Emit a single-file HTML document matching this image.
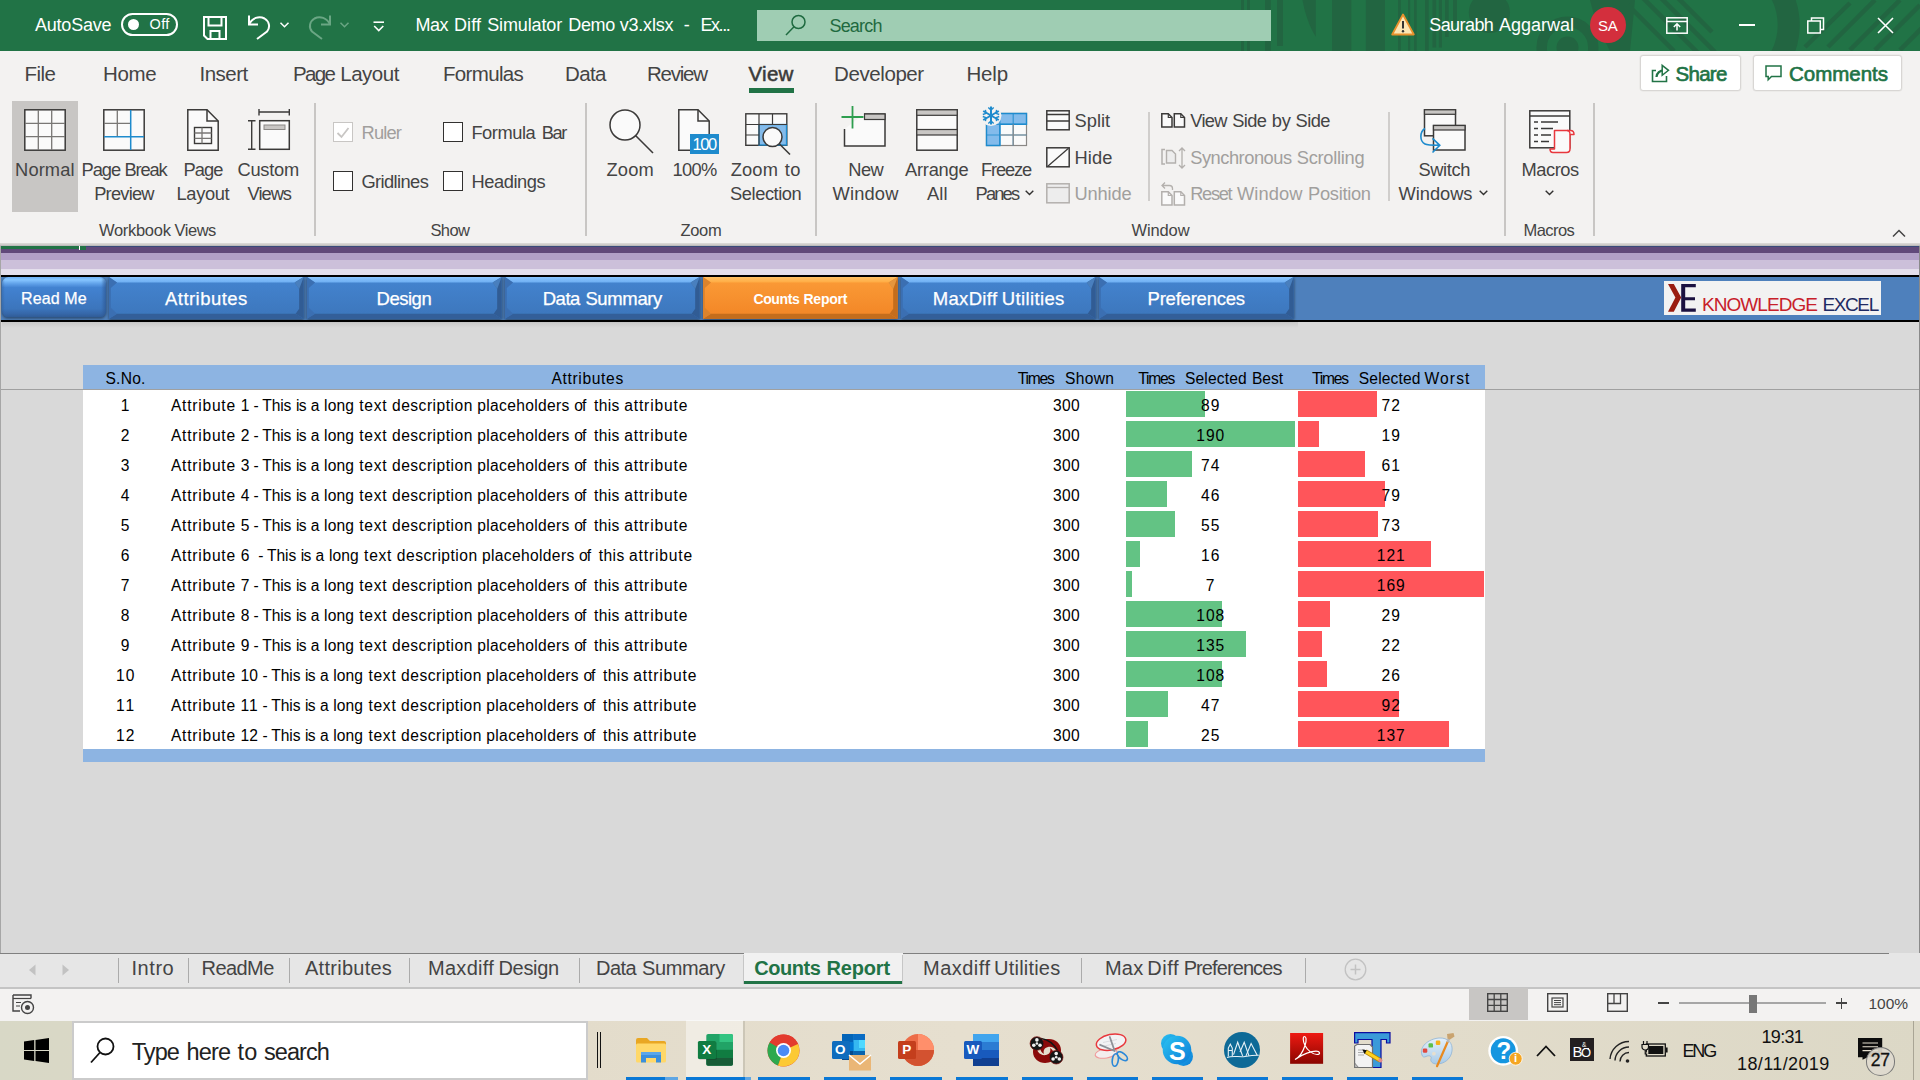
<!DOCTYPE html>
<html lang="en"><head><meta charset="utf-8"><title>Max Diff Simulator Demo v3.xlsx - Excel</title><style>
*{box-sizing:border-box;margin:0;padding:0}
html,body{width:1920px;height:1080px;overflow:hidden;background:#d9d9d9;font-family:"Liberation Sans",sans-serif}
.t{position:absolute;white-space:pre;display:block}
.b{position:absolute}
svg{position:absolute;overflow:visible}
</style></head><body>
<div class="b" style="left:0px;top:0px;width:1920px;height:50.5px;background:#217346;"></div>
<span class="t" style="left:34.90px;top:15.96px;font-size:18.00px;line-height:18.00px;color:#fff;letter-spacing:-0.195px;">AutoSave</span>
<div class="b" style="left:121px;top:12.5px;width:57px;height:23.5px;border:2px solid #fff;border-radius:12px"></div>
<div class="b" style="left:128px;top:18.5px;width:11px;height:11px;border-radius:50%;background:#fff"></div>
<span class="t" style="left:149.50px;top:17.23px;font-size:14.50px;line-height:14.50px;color:#fff;letter-spacing:0.369px;">Off</span>
<svg style="left:203px;top:16px;" width="24" height="24" viewBox="0 0 24 24"><path d="M1 1h22v22H4.5L1 19.5z M5.5 1v8.5h13V1 M7.5 23v-8h9v8" fill="none" stroke="#fff" stroke-width="2" stroke-linejoin="miter"/></svg>
<svg style="left:247px;top:14px;" width="24" height="26" viewBox="0 0 24 26"><path d="M2 1.5v9h9" fill="none" stroke="#fff" stroke-width="2"/><path d="M2 10.5C5 4 12 1.500 17.5 4.500C22.500 7.500 23.500 13.500 20 17.500L10 25" fill="none" stroke="#fff" stroke-width="2"/></svg>
<svg style="left:280px;top:22px;" width="9" height="6" viewBox="0 0 9 6"><path d="M0.500 0.800L4.500 4.800L8.500 0.800" fill="none" stroke="#fff" stroke-width="1.5"/></svg>
<svg style="left:308px;top:14px;" width="24" height="26" viewBox="0 0 24 26"><g transform="translate(24,0) scale(-1,1)"><path d="M2 1.5v9h9" fill="none" stroke="#6aa684" stroke-width="2"/><path d="M2 10.5C5 4 12 1.500 17.5 4.500C22.500 7.500 23.500 13.500 20 17.500L10 25" fill="none" stroke="#6aa684" stroke-width="2"/></g></svg>
<svg style="left:340px;top:22px;" width="9" height="6" viewBox="0 0 9 6"><path d="M0.500 0.800L4.500 4.800L8.500 0.800" fill="none" stroke="#6aa684" stroke-width="1.5"/></svg>
<svg style="left:373px;top:21px;" width="12" height="11" viewBox="0 0 12 11"><path d="M0.500 1.200h10.500" stroke="#fff" stroke-width="1.6"/><path d="M1.200 5L5.750 9.500L10.300 5" fill="none" stroke="#fff" stroke-width="1.6"/></svg>
<span class="t" style="left:415.40px;top:15.96px;font-size:18.00px;line-height:18.00px;color:#fff;letter-spacing:-0.446px;">Max </span>
<span class="t" style="left:453.90px;top:15.96px;font-size:18.00px;line-height:18.00px;color:#fff;letter-spacing:0.146px;">Diff </span>
<span class="t" style="left:487.20px;top:15.96px;font-size:18.00px;line-height:18.00px;color:#fff;letter-spacing:-0.133px;">Simulator </span>
<span class="t" style="left:568.20px;top:15.96px;font-size:18.00px;line-height:18.00px;color:#fff;letter-spacing:-0.290px;">Demo </span>
<span class="t" style="left:619.80px;top:15.96px;font-size:18.00px;line-height:18.00px;color:#fff;letter-spacing:-0.233px;">v3.xlsx </span>
<span class="t" style="left:683.70px;top:15.96px;font-size:18.00px;line-height:18.00px;color:#fff;">- </span>
<span class="t" style="left:700.50px;top:15.96px;font-size:18.00px;line-height:18.00px;color:#fff;letter-spacing:-1.448px;">Ex...</span>
<div class="b" style="left:1240px;top:0;width:680px;height:50.5px;overflow:hidden"><svg style="left:-1240px;top:0" width="1920" height="51" viewBox="0 0 1920 51"><g fill="#226541"><rect x="1241" y="0" width="3" height="51"/><rect x="1247" y="0" width="3" height="51"/><rect x="1265" y="0" width="5.800" height="51"/><rect x="1277" y="0" width="6" height="46"/><path d="M1302.500 0h13.300v36.700C1310 28 1305 14 1302.500 0z"/><rect x="1332" y="0" width="19.300" height="51"/><rect x="1365.800" y="0" width="19.200" height="51"/><rect x="1398" y="0" width="2.800" height="51"/><rect x="1408" y="0" width="2.200" height="51"/><rect x="1414" y="0" width="2.700" height="51"/><rect x="1425" y="0" width="3.700" height="51"/><rect x="1432.500" y="0" width="3.700" height="47.500"/><rect x="1438.800" y="0" width="3.200" height="47.500"/><rect x="1445" y="0" width="3.700" height="37"/><rect x="1453" y="0" width="4" height="23"/><circle cx="1489.400" cy="12.500" r="20.600"/><circle cx="1567.500" cy="47.500" r="11"/><path d="M1590 0h45l-5 51h-20c-8-15-15-30-20-51z"/></g><circle cx="1567.500" cy="47.500" r="25.800" fill="none" stroke="#226541" stroke-width="10.400"/><path d="M1768 -10A68 68 0 0 1 1768 60" fill="none" stroke="#226541" stroke-width="22" transform="translate(11,0)"/><g stroke="#226541" stroke-width="4.500" fill="none"><path d="M1628 5l46 46M1640 -5l58 58M1655 -8l60 60M1672 -8l40 40"/><path d="M1805 47L1850 3M1828 47l47-47M1850 50l50-50M1875 50l45-45M1900 50l25-25"/></g></svg></div>
<div class="b" style="left:757px;top:10px;width:514px;height:31px;background:#9fcdb3;"></div>
<svg style="left:785px;top:14px;" width="22" height="22" viewBox="0 0 22 22"><circle cx="13.500" cy="8" r="6.500" fill="none" stroke="#1f6a40" stroke-width="1.5"/><path d="M9 12.800L1 21" stroke="#1f6a40" stroke-width="1.5"/></svg>
<span class="t" style="left:829.50px;top:16.96px;font-size:18.00px;line-height:18.00px;color:#1f6a40;letter-spacing:-0.827px;">Search</span>
<svg style="left:1391px;top:13px;" width="24" height="23" viewBox="0 0 24 23"><path d="M12 1.500L22.800 21.500H1.200z" fill="#fbe6b4" stroke="#e8912d" stroke-width="1.8" stroke-linejoin="round"/><path d="M12 8v7.500" stroke="#333" stroke-width="2"/><circle cx="12" cy="18.300" r="1.200" fill="#333"/></svg>
<span class="t" style="left:1429.20px;top:15.96px;font-size:18.00px;line-height:18.00px;color:#fff;letter-spacing:-0.563px;">Saurabh </span>
<span class="t" style="left:1498.90px;top:15.96px;font-size:18.00px;line-height:18.00px;color:#fff;letter-spacing:0.007px;">Aggarwal</span>
<div class="b" style="left:1590px;top:7px;width:36px;height:36px;border-radius:50%;background:#d32f3d"></div>
<span class="t" style="left:1598.00px;top:17.80px;font-size:15.00px;line-height:15.00px;color:#fff;letter-spacing:-0.344px;">SA</span>
<svg style="left:1666px;top:17px;" width="22" height="17" viewBox="0 0 22 17"><rect x="0.800" y="0.800" width="20.400" height="15.400" fill="none" stroke="#fff" stroke-width="1.5"/><path d="M0.800 4.500h20.400" stroke="#fff" stroke-width="1.5"/><path d="M11 13.500v-6.500M7.800 10L11 6.800L14.200 10" fill="none" stroke="#fff" stroke-width="1.5"/></svg>
<div class="b" style="left:1739px;top:24.3px;width:16px;height:1.6px;background:#fff;"></div>
<svg style="left:1807px;top:17px;" width="18" height="17" viewBox="0 0 18 17"><path d="M4.500 4V1h12v11.500h-3" fill="none" stroke="#fff" stroke-width="1.5"/><rect x="0.800" y="4" width="12.500" height="12" fill="none" stroke="#fff" stroke-width="1.5"/></svg>
<svg style="left:1877px;top:17px;" width="17" height="17" viewBox="0 0 17 17"><path d="M1 1L16 16M16 1L1 16" stroke="#fff" stroke-width="1.6"/></svg>
<div class="b" style="left:0px;top:50.5px;width:1920px;height:192.5px;background:#f3f2f1;"></div>
<div class="b" style="left:0;top:243px;width:1920px;height:3px;background:linear-gradient(#dedcda,#cfcdcb 50%,#b4b4b4)"></div>
<span class="t" style="left:24.50px;top:64.15px;font-size:20.50px;line-height:20.50px;color:#444;letter-spacing:-0.585px;">File</span>
<span class="t" style="left:103.00px;top:64.15px;font-size:20.50px;line-height:20.50px;color:#444;letter-spacing:-0.339px;">Home</span>
<span class="t" style="left:199.50px;top:64.15px;font-size:20.50px;line-height:20.50px;color:#444;letter-spacing:-0.506px;">Insert</span>
<span class="t" style="left:293.10px;top:64.15px;font-size:20.50px;line-height:20.50px;color:#444;letter-spacing:-1.654px;">Page </span>
<span class="t" style="left:340.30px;top:64.15px;font-size:20.50px;line-height:20.50px;color:#444;letter-spacing:-0.502px;">Layout</span>
<span class="t" style="left:443.00px;top:64.15px;font-size:20.50px;line-height:20.50px;color:#444;letter-spacing:-0.658px;">Formulas</span>
<span class="t" style="left:565.00px;top:64.15px;font-size:20.50px;line-height:20.50px;color:#444;letter-spacing:-0.661px;">Data</span>
<span class="t" style="left:647.00px;top:64.15px;font-size:20.50px;line-height:20.50px;color:#444;letter-spacing:-1.222px;">Review</span>
<span class="t" style="left:834.00px;top:64.15px;font-size:20.50px;line-height:20.50px;color:#444;letter-spacing:-0.406px;">Developer</span>
<span class="t" style="left:966.50px;top:64.15px;font-size:20.50px;line-height:20.50px;color:#444;letter-spacing:-0.192px;">Help</span>
<span class="t" style="left:748.50px;top:64.15px;font-size:20.50px;line-height:20.50px;color:#3a3a3a;letter-spacing:0.263px;-webkit-text-stroke:0.55px;">View</span>
<div class="b" style="left:749px;top:88.3px;width:45px;height:4.3px;background:#217346;"></div>
<div class="b" style="left:1640px;top:55px;width:101px;height:36px;background:#fff;border:1px solid #d8d6d4;border-radius:3px;box-shadow:0 0 0 0.500px #e6e4e2"></div>
<div class="b" style="left:1753px;top:55px;width:149px;height:36px;background:#fff;border:1px solid #d8d6d4;border-radius:3px;box-shadow:0 0 0 0.500px #e6e4e2"></div>
<svg style="left:1651px;top:64px;" width="20" height="18" viewBox="0 0 20 18"><path d="M5 6.500H1.500v11h14v-5.500" fill="none" stroke="#217346" stroke-width="1.600"/><path d="M5.500 13C6 8.500 9 6.300 13.500 6.300" fill="none" stroke="#217346" stroke-width="2.200"/><path d="M11.200 1.300L17.500 6.300L11.200 11.300z" fill="#fff" stroke="#217346" stroke-width="1.500" stroke-linejoin="miter"/></svg>
<span class="t" style="left:1675.50px;top:64.15px;font-size:20.50px;line-height:20.50px;color:#217346;letter-spacing:-0.715px;-webkit-text-stroke:0.65px;">Share</span>
<svg style="left:1765.3px;top:64.8px;" width="18" height="17" viewBox="0 0 18 17"><path d="M1 1h15v10.500h-9.500l-3.300 3.300v-3.300h-2.200z" fill="none" stroke="#217346" stroke-width="1.5" stroke-linejoin="miter"/></svg>
<span class="t" style="left:1789.00px;top:64.15px;font-size:20.50px;line-height:20.50px;color:#217346;letter-spacing:-0.015px;-webkit-text-stroke:0.65px;">Comments</span>
<div class="b" style="left:313.7px;top:102.8px;width:2px;height:133.7px;background:#c8c6c4;"></div>
<div class="b" style="left:585px;top:102.8px;width:2px;height:133.7px;background:#c8c6c4;"></div>
<div class="b" style="left:815px;top:102.8px;width:2px;height:133.7px;background:#c8c6c4;"></div>
<div class="b" style="left:1503.7px;top:102.8px;width:2px;height:133.7px;background:#c8c6c4;"></div>
<div class="b" style="left:1592.7px;top:102.8px;width:2px;height:133.7px;background:#c8c6c4;"></div>
<div class="b" style="left:1148.4px;top:112px;width:2px;height:88.5px;background:#d0cecc;"></div>
<div class="b" style="left:1388px;top:112px;width:2px;height:88.5px;background:#d0cecc;"></div>
<span class="t" style="left:98.90px;top:221.63px;font-size:16.50px;line-height:16.50px;color:#444;letter-spacing:-0.278px;">Workbook </span>
<span class="t" style="left:174.50px;top:221.63px;font-size:16.50px;line-height:16.50px;color:#444;letter-spacing:-0.471px;">Views</span>
<span class="t" style="left:430.50px;top:221.63px;font-size:16.50px;line-height:16.50px;color:#444;letter-spacing:-0.652px;">Show</span>
<span class="t" style="left:680.50px;top:221.63px;font-size:16.50px;line-height:16.50px;color:#444;letter-spacing:-0.339px;">Zoom</span>
<span class="t" style="left:1131.50px;top:221.63px;font-size:16.50px;line-height:16.50px;color:#444;letter-spacing:-0.125px;">Window</span>
<span class="t" style="left:1523.50px;top:221.63px;font-size:16.50px;line-height:16.50px;color:#444;letter-spacing:-0.562px;">Macros</span>
<svg style="left:1892px;top:229px;" width="14" height="9" viewBox="0 0 14 9"><path d="M1 7.500L7 1.500L13 7.500" fill="none" stroke="#444" stroke-width="1.5"/></svg>
<div class="b" style="left:12px;top:100.6px;width:66px;height:111.4px;background:#c8c6c4;"></div>
<span class="t" style="left:15.10px;top:160.51px;font-size:18.30px;line-height:18.30px;color:#444;letter-spacing:0.087px;">Normal</span>
<span class="t" style="left:81.40px;top:160.51px;font-size:18.30px;line-height:18.30px;color:#444;letter-spacing:-0.944px;">Page </span>
<span class="t" style="left:124.50px;top:160.51px;font-size:18.30px;line-height:18.30px;color:#444;letter-spacing:-1.148px;">Break</span>
<span class="t" style="left:94.20px;top:184.51px;font-size:18.30px;line-height:18.30px;color:#444;letter-spacing:-0.774px;">Preview</span>
<span class="t" style="left:183.50px;top:160.51px;font-size:18.30px;line-height:18.30px;color:#444;letter-spacing:-0.915px;">Page</span>
<span class="t" style="left:176.50px;top:184.51px;font-size:18.30px;line-height:18.30px;color:#444;letter-spacing:-0.344px;">Layout</span>
<span class="t" style="left:237.50px;top:160.51px;font-size:18.30px;line-height:18.30px;color:#444;letter-spacing:-0.273px;">Custom</span>
<span class="t" style="left:247.50px;top:184.51px;font-size:18.30px;line-height:18.30px;color:#444;letter-spacing:-0.986px;">Views</span>
<span class="t" style="left:606.50px;top:160.51px;font-size:18.30px;line-height:18.30px;color:#444;letter-spacing:0.190px;">Zoom</span>
<span class="t" style="left:672.50px;top:160.51px;font-size:18.30px;line-height:18.30px;color:#444;letter-spacing:-0.647px;">100%</span>
<span class="t" style="left:730.70px;top:160.51px;font-size:18.30px;line-height:18.30px;color:#444;letter-spacing:0.162px;">Zoom </span>
<span class="t" style="left:784.80px;top:160.51px;font-size:18.30px;line-height:18.30px;color:#444;letter-spacing:0.300px;">to</span>
<span class="t" style="left:730.10px;top:184.51px;font-size:18.30px;line-height:18.30px;color:#444;letter-spacing:-0.449px;">Selection</span>
<span class="t" style="left:848.20px;top:160.51px;font-size:18.30px;line-height:18.30px;color:#444;letter-spacing:-0.511px;">New</span>
<span class="t" style="left:832.50px;top:184.51px;font-size:18.30px;line-height:18.30px;color:#444;letter-spacing:0.176px;">Window</span>
<span class="t" style="left:905.10px;top:160.51px;font-size:18.30px;line-height:18.30px;color:#444;letter-spacing:-0.253px;">Arrange</span>
<span class="t" style="left:927.00px;top:184.51px;font-size:18.30px;line-height:18.30px;color:#444;letter-spacing:0.069px;">All</span>
<span class="t" style="left:981.00px;top:160.51px;font-size:18.30px;line-height:18.30px;color:#444;letter-spacing:-1.165px;">Freeze</span>
<span class="t" style="left:975.50px;top:184.51px;font-size:18.30px;line-height:18.30px;color:#444;letter-spacing:-1.810px;">Panes</span>
<span class="t" style="left:1418.50px;top:160.51px;font-size:18.30px;line-height:18.30px;color:#444;letter-spacing:-0.393px;">Switch</span>
<span class="t" style="left:1398.50px;top:184.51px;font-size:18.30px;line-height:18.30px;color:#444;letter-spacing:-0.026px;">Windows</span>
<span class="t" style="left:1521.50px;top:160.51px;font-size:18.30px;line-height:18.30px;color:#444;letter-spacing:-0.461px;">Macros</span>
<svg style="left:1025px;top:189.5px;" width="9" height="6" viewBox="0 0 9 6"><path d="M0.700 0.800L4.500 4.600L8.300 0.800" fill="none" stroke="#323130" stroke-width="1.4"/></svg>
<svg style="left:1478.5px;top:189.5px;" width="9" height="6" viewBox="0 0 9 6"><path d="M0.700 0.800L4.500 4.600L8.300 0.800" fill="none" stroke="#323130" stroke-width="1.4"/></svg>
<svg style="left:1545px;top:189.5px;" width="9" height="6" viewBox="0 0 9 6"><path d="M0.700 0.800L4.500 4.600L8.300 0.800" fill="none" stroke="#323130" stroke-width="1.4"/></svg>
<div class="b" style="left:333px;top:122px;width:20px;height:20px;background:#fff;border:1.300px solid #c8c6c4"></div>
<div class="b" style="left:443px;top:122px;width:20px;height:20px;background:#fff;border:1.300px solid #323130"></div>
<div class="b" style="left:333px;top:171px;width:20px;height:20px;background:#fff;border:1.300px solid #323130"></div>
<div class="b" style="left:443px;top:171px;width:20px;height:20px;background:#fff;border:1.300px solid #323130"></div>
<svg style="left:336px;top:126px;" width="14" height="13" viewBox="0 0 14 13"><path d="M1.500 7L5.500 11L12.500 2" fill="none" stroke="#c8c6c4" stroke-width="1.8"/></svg>
<span class="t" style="left:361.50px;top:124.21px;font-size:18.30px;line-height:18.30px;color:#a19f9d;letter-spacing:-0.819px;">Ruler</span>
<span class="t" style="left:471.40px;top:124.21px;font-size:18.30px;line-height:18.30px;color:#444;letter-spacing:-0.453px;">Formula </span>
<span class="t" style="left:541.70px;top:124.21px;font-size:18.30px;line-height:18.30px;color:#444;letter-spacing:-1.381px;">Bar</span>
<span class="t" style="left:361.50px;top:172.51px;font-size:18.30px;line-height:18.30px;color:#444;letter-spacing:-0.605px;">Gridlines</span>
<span class="t" style="left:471.50px;top:172.51px;font-size:18.30px;line-height:18.30px;color:#444;letter-spacing:-0.433px;">Headings</span>
<span class="t" style="left:1074.50px;top:111.51px;font-size:18.30px;line-height:18.30px;color:#444;letter-spacing:0.027px;">Split</span>
<span class="t" style="left:1074.50px;top:149.21px;font-size:18.30px;line-height:18.30px;color:#444;letter-spacing:0.112px;">Hide</span>
<span class="t" style="left:1074.50px;top:185.21px;font-size:18.30px;line-height:18.30px;color:#a19f9d;letter-spacing:-0.170px;">Unhide</span>
<span class="t" style="left:1190.20px;top:111.51px;font-size:18.30px;line-height:18.30px;color:#444;letter-spacing:-0.656px;">View </span>
<span class="t" style="left:1232.20px;top:111.51px;font-size:18.30px;line-height:18.30px;color:#444;letter-spacing:-0.598px;">Side </span>
<span class="t" style="left:1271.70px;top:111.51px;font-size:18.30px;line-height:18.30px;color:#444;letter-spacing:-0.208px;">by </span>
<span class="t" style="left:1295.60px;top:111.51px;font-size:18.30px;line-height:18.30px;color:#444;letter-spacing:-0.570px;">Side</span>
<span class="t" style="left:1190.20px;top:149.21px;font-size:18.30px;line-height:18.30px;color:#a19f9d;letter-spacing:-0.478px;">Synchronous </span>
<span class="t" style="left:1296.80px;top:149.21px;font-size:18.30px;line-height:18.30px;color:#a19f9d;letter-spacing:-0.295px;">Scrolling</span>
<span class="t" style="left:1190.20px;top:185.21px;font-size:18.30px;line-height:18.30px;color:#a19f9d;letter-spacing:-1.326px;">Reset </span>
<span class="t" style="left:1236.90px;top:185.21px;font-size:18.30px;line-height:18.30px;color:#a19f9d;letter-spacing:0.122px;">Window </span>
<span class="t" style="left:1308.10px;top:185.21px;font-size:18.30px;line-height:18.30px;color:#a19f9d;letter-spacing:-0.300px;">Position</span>
<svg style="left:24px;top:109px;" width="42" height="42" viewBox="0 0 42 42"><rect x="0.800" y="0.800" width="40.400" height="40.400" fill="#fafafa" stroke="#3b3a39" stroke-width="1.5"/><path d="M14.300 1v40M27.700 1v40M1 14.300h40M1 27.700h40" stroke="#797775" stroke-width="1.3"/></svg>
<svg style="left:103px;top:109px;" width="42" height="42" viewBox="0 0 42 42"><rect x="0.800" y="0.800" width="40.400" height="40.400" fill="#fafafa" stroke="#3b3a39" stroke-width="1.5"/><path d="M14.300 1v26.500M1 14.300h26.500" stroke="#797775" stroke-width="1.3"/><path d="M27.700 1v40M1 27.700h40" stroke="#1e8bcd" stroke-width="1.5"/></svg>
<svg style="left:186.5px;top:109px;" width="32" height="42" viewBox="0 0 32 42"><path d="M0.800 0.800h19.200l11.200 11.200v29.200H0.800z" fill="#fafafa" stroke="#3b3a39" stroke-width="1.5"/><path d="M20 0.800v11.200h11.200" fill="none" stroke="#3b3a39" stroke-width="1.5"/><rect x="7.500" y="18.500" width="17" height="16" fill="none" stroke="#3b3a39" stroke-width="1.4"/><path d="M7.500 24h17M7.500 29.300h17M15 18.500v16" stroke="#797775" stroke-width="1.3"/></svg>
<svg style="left:248px;top:109px;" width="42" height="42" viewBox="0 0 42 42"><path d="M11 3h31M11 0v6.500M41.300 0v6.500" stroke="#3b3a39" stroke-width="1.4"/><path d="M3.700 11v30M0 11.700h7.500M0 40.300h7.500" stroke="#3b3a39" stroke-width="1.4"/><rect x="11.700" y="11.700" width="29.600" height="28.600" fill="#fafafa" stroke="#3b3a39" stroke-width="1.5"/><rect x="16" y="16" width="21" height="4.500" fill="#c8c6c4" stroke="#8a8886" stroke-width="1"/></svg>
<svg style="left:609px;top:109px;" width="45" height="45" viewBox="0 0 45 45"><circle cx="16" cy="16" r="15" fill="#fafafa" stroke="#3b3a39" stroke-width="1.5"/><path d="M26.500 26.500L44 44" stroke="#3b3a39" stroke-width="1.6"/></svg>
<svg style="left:678px;top:109px;" width="42" height="46" viewBox="0 0 42 46"><path d="M0.800 0.800h19.200l11.200 11.200v29.200H0.800z" fill="#fafafa" stroke="#3b3a39" stroke-width="1.5"/><path d="M20 0.800v11.200h11.200" fill="none" stroke="#3b3a39" stroke-width="1.5"/><rect x="12" y="25" width="29" height="20" fill="#1e8bcd"/></svg>
<span class="t" style="left:692.50px;top:136.23px;font-size:16.50px;line-height:16.50px;color:#fff;letter-spacing:-1.413px;">100</span>
<svg style="left:745px;top:113px;" width="46" height="42" viewBox="0 0 46 42"><rect x="0.800" y="0.800" width="41" height="31.500" fill="#fafafa" stroke="#3b3a39" stroke-width="1.4"/><rect x="14" y="11.500" width="27.500" height="20.500" fill="#83bbeb" stroke="#1e8bcd" stroke-width="1.3"/><path d="M14 1v31M27.500 1v10M1 11.500h41M1 22h13" stroke="#3b3a39" stroke-width="1.2"/><circle cx="27.500" cy="24" r="9.500" fill="#fafafa" stroke="#3b3a39" stroke-width="1.5"/><path d="M34.500 31L45 41.500" stroke="#3b3a39" stroke-width="1.6"/></svg>
<svg style="left:841px;top:105px;" width="46" height="46" viewBox="0 0 46 46"><path d="M3.500 24v17h40.500V9H23" fill="#fafafa" stroke="#3b3a39" stroke-width="1.500"/><rect x="23.500" y="9" width="20.500" height="5.500" fill="#c8c6c4" stroke="#3b3a39" stroke-width="1.200"/><path d="M11.500 1v22.500M0.500 12h22" stroke="#2e9e4f" stroke-width="1.800"/></svg>
<svg style="left:916px;top:109px;" width="42" height="42" viewBox="0 0 42 42"><rect x="0.800" y="0.800" width="40.400" height="40.400" fill="#fafafa" stroke="#3b3a39" stroke-width="1.5"/><rect x="0.800" y="0.800" width="40.400" height="5.500" fill="#c8c6c4" stroke="#3b3a39" stroke-width="1.2"/><rect x="0.800" y="20.500" width="40.400" height="5.500" fill="#c8c6c4" stroke="#3b3a39" stroke-width="1.2"/></svg>
<svg style="left:982px;top:105px;" width="46" height="48" viewBox="0 0 46 48"><rect x="4.500" y="8.500" width="40" height="32" fill="#fafafa" stroke="#8a8886" stroke-width="1.2"/><path d="M4.500 8.500h40v10.800h-26.600v21.200h-13.400z" fill="#83bbeb" stroke="#1e8bcd" stroke-width="1.4"/><path d="M17.900 8.500v32M31.200 8.500v32M4.500 19.300h40M4.500 30h40" stroke="#1e8bcd" stroke-width="1.2" opacity=".8"/><rect x="18.500" y="20" width="25.500" height="20" fill="none"/><path d="M31.200 19.300v21.200M17.900 30h26.600" stroke="#8a8886" stroke-width="1.2"/><circle cx="9" cy="10.500" r="10.500" fill="#f3f2f1"/><path d="M9 1.500v18M1.200 6l15.600 9M1.200 15l15.600-9" stroke="#1e8bcd" stroke-width="2"/><path d="M6.300 2.500L9 5L11.700 2.500M6.300 18.500L9 16L11.700 18.500M0.800 9.500l3.200-1.200l-0.600-3.400M17.200 9.500l-3.200-1.200l0.600-3.400M0.800 11.500l3.200 1.200l-0.600 3.400M17.200 11.500l-3.200 1.200l0.600 3.400" fill="none" stroke="#1e8bcd" stroke-width="1.400"/></svg>
<svg style="left:1046px;top:109.5px;" width="24" height="21" viewBox="0 0 24 21"><rect x="0.800" y="0.800" width="22.400" height="19" fill="#fafafa" stroke="#3b3a39" stroke-width="1.5"/><path d="M1 4.500h22M1 11h22" stroke="#3b3a39" stroke-width="1.3"/></svg>
<svg style="left:1046px;top:147px;" width="24" height="21" viewBox="0 0 24 21"><rect x="0.800" y="0.800" width="22.400" height="19" fill="#fafafa" stroke="#3b3a39" stroke-width="1.5"/><path d="M1.500 19.500L22.500 1.300" stroke="#3b3a39" stroke-width="1.3"/></svg>
<svg style="left:1046px;top:182.5px;" width="24" height="21" viewBox="0 0 24 21"><rect x="0.800" y="0.800" width="22.400" height="19" fill="#ededed" stroke="#b3b0ad" stroke-width="1.5"/><path d="M1 4.500h22" stroke="#b3b0ad" stroke-width="1.3"/></svg>
<svg style="left:1161px;top:113px;" width="24" height="15" viewBox="0 0 24 15"><path d="M0.800 0.800h6.500l3.700 3.700v9.500H0.800z" fill="#fafafa" stroke="#3b3a39" stroke-width="1.5"/><path d="M7.300 0.800v3.700h3.700" fill="none" stroke="#3b3a39" stroke-width="1.200"/><g transform="translate(12.500,0)"><path d="M0.800 0.800h6.500l3.700 3.700v9.500H0.800z" fill="#fafafa" stroke="#3b3a39" stroke-width="1.5"/><path d="M7.300 0.800v3.700h3.700" fill="none" stroke="#3b3a39" stroke-width="1.200"/></g></svg>
<svg style="left:1161px;top:147px;" width="25" height="22" viewBox="0 0 25 22"><path d="M4 2.500H1v14.500h3" fill="none" stroke="#b3b0ad" stroke-width="1.5"/><path d="M5.500 3.500h5.500l3.500 3.500v9H5.500z" fill="#ededed" stroke="#b3b0ad" stroke-width="1.4"/><path d="M21 1v20M18 4l3-3l3 3M18 18l3 3l3-3" fill="none" stroke="#b3b0ad" stroke-width="1.3"/></svg>
<svg style="left:1161px;top:181px;" width="25" height="24" viewBox="0 0 25 24"><path d="M1 4.500h7.500a3 3 0 0 1 3 3v1.500M4 1.500L1 4.500L4 7.500" fill="none" stroke="#b3b0ad" stroke-width="1.3"/><g transform="translate(0,10)"><path d="M0.800 0.800h6.500l3.700 3.700v9.500H0.800z" fill="#fafafa" stroke="#b3b0ad" stroke-width="1.5"/><path d="M7.300 0.800v3.700h3.700" fill="none" stroke="#b3b0ad" stroke-width="1.200"/><g transform="translate(12.500,0)"><path d="M0.800 0.800h6.500l3.700 3.700v9.500H0.800z" fill="#fafafa" stroke="#b3b0ad" stroke-width="1.5"/><path d="M7.300 0.800v3.700h3.700" fill="none" stroke="#b3b0ad" stroke-width="1.200"/></g></g></svg>
<svg style="left:1420px;top:109px;" width="46" height="46" viewBox="0 0 46 46"><rect x="4.500" y="0.800" width="31" height="26" fill="#fafafa" stroke="#3b3a39" stroke-width="1.5"/><rect x="4.500" y="0.800" width="31" height="4.500" fill="#c8c6c4" stroke="#3b3a39" stroke-width="1.2"/><rect x="13.500" y="16.500" width="31.500" height="24.500" fill="#fafafa" stroke="#3b3a39" stroke-width="1.5"/><rect x="13.500" y="16.500" width="31.500" height="4.500" fill="#c8c6c4" stroke="#3b3a39" stroke-width="1.2"/><path d="M5 19.500C-0.500 23-0.500 32 5 35C7 36.200 9 36.300 19.500 36.300M12.500 29.300L19.800 36.300L12.500 43.500" fill="none" stroke="#1e8bcd" stroke-width="1.600"/></svg>
<svg style="left:1529px;top:110px;" width="46" height="44" viewBox="0 0 46 44"><rect x="0.800" y="0.800" width="40" height="37" fill="#fafafa" stroke="#3b3a39" stroke-width="1.5"/><path d="M1 6h40" stroke="#3b3a39" stroke-width="1.3"/><path d="M5 12h4M12 12h17M5 18.500h4M12 18.500h12M5 25h4M12 25h10M5 31.500h4M12 31.500h8" stroke="#3b3a39" stroke-width="1.4"/><path d="M25.500 20.500h16c2.500 0 3.500 2 3.500 4h-4v14.500c0 2-1.500 3.500-3.500 3.500h-13.500c-2 0-3-1.500-3-3.500h4.500z" fill="#fafafa" stroke="#e8373d" stroke-width="1.5" stroke-linejoin="round"/><path d="M41 24.500c0-2.500-1-4-3-4" fill="none" stroke="#e8373d" stroke-width="1.3"/></svg>
<div class="b" style="left:0px;top:246px;width:1920px;height:6.75px;background:#60497a;"></div>
<div class="b" style="left:0px;top:246px;width:1920px;height:1px;background:#3a4a7a;"></div>
<div class="b" style="left:0px;top:252.75px;width:1920px;height:7.25px;background:#b1a0c7;"></div>
<div class="b" style="left:0px;top:260px;width:1920px;height:8.75px;background:#ccc0da;"></div>
<div class="b" style="left:0px;top:268.75px;width:1920px;height:6px;background:#e4dfec;"></div>
<div class="b" style="left:1px;top:246px;width:78px;height:2.6px;background:#217346;"></div>
<div class="b" style="left:79px;top:246px;width:1px;height:4px;background:#fff;"></div>
<div class="b" style="left:80.3px;top:246px;width:5.7px;height:4px;background:#217346;"></div>
<div class="b" style="left:0px;top:274.75px;width:1920px;height:47px;background:#000;"></div>
<div class="b" style="left:0px;top:277px;width:1920px;height:43px;background:#4e80bc;"></div>
<div class="b" style="left:2px;top:321.75px;width:1296px;height:6px;background:linear-gradient(#c9c9c9,#d9d9d9)"></div>
<svg style="left:1.5px;top:277.1px;filter:drop-shadow(0 1px 1.500px rgba(0,0,0,.5));" width="104.1" height="40.6" viewBox="0 0 104.1 40.6"><defs><linearGradient id="g1" x1="0" y1="0" x2="0" y2="1"><stop offset="0" stop-color="#6fb0f5"/><stop offset=".07" stop-color="#86c5ff"/><stop offset=".17" stop-color="#5e9fe8"/><stop offset=".26" stop-color="#4282d1"/><stop offset=".78" stop-color="#3c75bc"/><stop offset=".9" stop-color="#3668aa"/><stop offset="1" stop-color="#2f5a93"/></linearGradient><linearGradient id="g1r" x1="0" y1="0" x2="1" y2="0"><stop offset="0" stop-color="#2c5690" stop-opacity="0"/><stop offset="1" stop-color="#2c5690" stop-opacity=".75"/></linearGradient><linearGradient id="g1l" x1="0" y1="0" x2="1" y2="0"><stop offset="0" stop-color="#2c5690" stop-opacity=".35"/><stop offset="1" stop-color="#2c5690" stop-opacity="0"/></linearGradient><clipPath id="g1c"><rect x="0" y="0" width="104.1" height="40.6" rx="6.500"/></clipPath></defs><g clip-path="url(#g1c)"><rect x="0" y="0" width="104.1" height="40.6" fill="url(#g1)"/><rect x="99.1" y="0" width="5" height="40.6" fill="url(#g1r)"/><rect x="0" y="0" width="3" height="40.6" fill="url(#g1l)"/></g></svg>
<span class="t" style="left:21.00px;top:290.66px;font-size:16.00px;line-height:16.00px;color:#fff;letter-spacing:0.120px;-webkit-text-stroke:0.25px;">Read Me</span>
<svg style="left:109px;top:277.1px;filter:drop-shadow(0 1px 1.500px rgba(0,0,0,.5));" width="194.7" height="41.7" viewBox="0 0 194.7 41.7"><defs><linearGradient id="g109" x1="0" y1="0" x2="0" y2="1"><stop offset="0" stop-color="#4484d0"/><stop offset="1" stop-color="#3c76bb"/></linearGradient><linearGradient id="g109t" x1="0" y1="0" x2="0" y2="1"><stop offset="0" stop-color="#8cc6ff"/><stop offset="1" stop-color="#6eaef2"/></linearGradient></defs><rect x="0" y="0" width="194.7" height="41.7" fill="url(#g109)"/><path d="M0 0H194.7L185.7 5.500H8z" fill="url(#g109t)"/><path d="M0 41.7H194.7L186.7 36.7H8z" fill="#335f99"/><path d="M0 0L8 5.500L1.800 11V30.7L8 36.7L0 41.7z" fill="#3b6fb2"/><path d="M194.7 0L185.7 5.500L190.2 12V31.7L186.7 36.7L194.7 41.7z" fill="#315c94"/><path d="M194.7 0L185.7 5.500L190.2 12z" fill="#5c9ce0" opacity=".55"/></svg>
<span class="t" style="left:165.00px;top:289.84px;font-size:18.50px;line-height:18.50px;color:#fff;letter-spacing:0.457px;-webkit-text-stroke:0.25px;">Attributes</span>
<svg style="left:307px;top:277.1px;filter:drop-shadow(0 1px 1.500px rgba(0,0,0,.5));" width="194.7" height="41.7" viewBox="0 0 194.7 41.7"><defs><linearGradient id="g307" x1="0" y1="0" x2="0" y2="1"><stop offset="0" stop-color="#4484d0"/><stop offset="1" stop-color="#3c76bb"/></linearGradient><linearGradient id="g307t" x1="0" y1="0" x2="0" y2="1"><stop offset="0" stop-color="#8cc6ff"/><stop offset="1" stop-color="#6eaef2"/></linearGradient></defs><rect x="0" y="0" width="194.7" height="41.7" fill="url(#g307)"/><path d="M0 0H194.7L185.7 5.500H8z" fill="url(#g307t)"/><path d="M0 41.7H194.7L186.7 36.7H8z" fill="#335f99"/><path d="M0 0L8 5.500L1.800 11V30.7L8 36.7L0 41.7z" fill="#3b6fb2"/><path d="M194.7 0L185.7 5.500L190.2 12V31.7L186.7 36.7L194.7 41.7z" fill="#315c94"/><path d="M194.7 0L185.7 5.500L190.2 12z" fill="#5c9ce0" opacity=".55"/></svg>
<span class="t" style="left:376.50px;top:289.84px;font-size:18.50px;line-height:18.50px;color:#fff;letter-spacing:-0.472px;-webkit-text-stroke:0.25px;">Design</span>
<svg style="left:505px;top:277.1px;filter:drop-shadow(0 1px 1.500px rgba(0,0,0,.5));" width="194.7" height="41.7" viewBox="0 0 194.7 41.7"><defs><linearGradient id="g505" x1="0" y1="0" x2="0" y2="1"><stop offset="0" stop-color="#4484d0"/><stop offset="1" stop-color="#3c76bb"/></linearGradient><linearGradient id="g505t" x1="0" y1="0" x2="0" y2="1"><stop offset="0" stop-color="#8cc6ff"/><stop offset="1" stop-color="#6eaef2"/></linearGradient></defs><rect x="0" y="0" width="194.7" height="41.7" fill="url(#g505)"/><path d="M0 0H194.7L185.7 5.500H8z" fill="url(#g505t)"/><path d="M0 41.7H194.7L186.7 36.7H8z" fill="#335f99"/><path d="M0 0L8 5.500L1.800 11V30.7L8 36.7L0 41.7z" fill="#3b6fb2"/><path d="M194.7 0L185.7 5.500L190.2 12V31.7L186.7 36.7L194.7 41.7z" fill="#315c94"/><path d="M194.7 0L185.7 5.500L190.2 12z" fill="#5c9ce0" opacity=".55"/></svg>
<span class="t" style="left:542.70px;top:289.84px;font-size:18.50px;line-height:18.50px;color:#fff;letter-spacing:-0.451px;-webkit-text-stroke:0.25px;">Data </span>
<span class="t" style="left:585.40px;top:289.84px;font-size:18.50px;line-height:18.50px;color:#fff;letter-spacing:-0.362px;-webkit-text-stroke:0.25px;">Summary</span>
<svg style="left:703px;top:277.1px;filter:drop-shadow(0 1px 1.500px rgba(0,0,0,.5));" width="194.7" height="41.7" viewBox="0 0 194.7 41.7"><defs><linearGradient id="g703" x1="0" y1="0" x2="0" y2="1"><stop offset="0" stop-color="#fb9c38"/><stop offset="1" stop-color="#f28525"/></linearGradient><linearGradient id="g703t" x1="0" y1="0" x2="0" y2="1"><stop offset="0" stop-color="#ffc266"/><stop offset="1" stop-color="#ffab42"/></linearGradient></defs><rect x="0" y="0" width="194.7" height="41.7" fill="url(#g703)"/><path d="M0 0H194.7L185.7 5.500H8z" fill="url(#g703t)"/><path d="M0 41.7H194.7L186.7 36.7H8z" fill="#c46d1c"/><path d="M0 0L8 5.500L1.800 11V30.7L8 36.7L0 41.7z" fill="#dc832c"/><path d="M194.7 0L185.7 5.500L190.2 12V31.7L186.7 36.7L194.7 41.7z" fill="#c46d1c"/><path d="M194.7 0L185.7 5.500L190.2 12z" fill="#ffb65a" opacity=".55"/></svg>
<span class="t" style="left:753.50px;top:292.15px;font-size:14.00px;line-height:14.00px;color:#fff;font-weight:700;letter-spacing:-0.403px;">Counts </span>
<span class="t" style="left:803.50px;top:292.15px;font-size:14.00px;line-height:14.00px;color:#fff;font-weight:700;letter-spacing:-0.259px;">Report</span>
<svg style="left:901px;top:277.1px;filter:drop-shadow(0 1px 1.500px rgba(0,0,0,.5));" width="194.7" height="41.7" viewBox="0 0 194.7 41.7"><defs><linearGradient id="g901" x1="0" y1="0" x2="0" y2="1"><stop offset="0" stop-color="#4484d0"/><stop offset="1" stop-color="#3c76bb"/></linearGradient><linearGradient id="g901t" x1="0" y1="0" x2="0" y2="1"><stop offset="0" stop-color="#8cc6ff"/><stop offset="1" stop-color="#6eaef2"/></linearGradient></defs><rect x="0" y="0" width="194.7" height="41.7" fill="url(#g901)"/><path d="M0 0H194.7L185.7 5.500H8z" fill="url(#g901t)"/><path d="M0 41.7H194.7L186.7 36.7H8z" fill="#335f99"/><path d="M0 0L8 5.500L1.800 11V30.7L8 36.7L0 41.7z" fill="#3b6fb2"/><path d="M194.7 0L185.7 5.500L190.2 12V31.7L186.7 36.7L194.7 41.7z" fill="#315c94"/><path d="M194.7 0L185.7 5.500L190.2 12z" fill="#5c9ce0" opacity=".55"/></svg>
<span class="t" style="left:932.80px;top:289.84px;font-size:18.50px;line-height:18.50px;color:#fff;letter-spacing:0.312px;-webkit-text-stroke:0.25px;">MaxDiff </span>
<span class="t" style="left:1001.80px;top:289.84px;font-size:18.50px;line-height:18.50px;color:#fff;letter-spacing:0.362px;-webkit-text-stroke:0.25px;">Utilities</span>
<svg style="left:1099px;top:277.1px;filter:drop-shadow(0 1px 1.500px rgba(0,0,0,.5));" width="194.7" height="41.7" viewBox="0 0 194.7 41.7"><defs><linearGradient id="g1099" x1="0" y1="0" x2="0" y2="1"><stop offset="0" stop-color="#4484d0"/><stop offset="1" stop-color="#3c76bb"/></linearGradient><linearGradient id="g1099t" x1="0" y1="0" x2="0" y2="1"><stop offset="0" stop-color="#8cc6ff"/><stop offset="1" stop-color="#6eaef2"/></linearGradient></defs><rect x="0" y="0" width="194.7" height="41.7" fill="url(#g1099)"/><path d="M0 0H194.7L185.7 5.500H8z" fill="url(#g1099t)"/><path d="M0 41.7H194.7L186.7 36.7H8z" fill="#335f99"/><path d="M0 0L8 5.500L1.800 11V30.7L8 36.7L0 41.7z" fill="#3b6fb2"/><path d="M194.7 0L185.7 5.500L190.2 12V31.7L186.7 36.7L194.7 41.7z" fill="#315c94"/><path d="M194.7 0L185.7 5.500L190.2 12z" fill="#5c9ce0" opacity=".55"/></svg>
<span class="t" style="left:1147.50px;top:289.84px;font-size:18.50px;line-height:18.50px;color:#fff;letter-spacing:-0.214px;-webkit-text-stroke:0.25px;">Preferences</span>
<div class="b" style="left:1664px;top:281px;width:217px;height:34px;background:#f2f2f2;"></div>
<svg style="left:1664px;top:281px;" width="34" height="34" viewBox="0 0 34 34"><path d="M4 3h5.800l7.400 13.400l-7.400 14.300H4l7.400-14.300z" fill="#9a1c10"/><path d="M17.200 3h14.600v3.200h-10.600v10h9.800v3h-9.800v8.300h10.600v3.200H17.200z" fill="#1b1140"/></svg>
<span class="t" style="left:1702.00px;top:294.92px;font-size:19.00px;line-height:19.00px;color:#c8202a;letter-spacing:-0.945px;">KNOWLEDGE</span>
<span class="t" style="left:1822.50px;top:294.92px;font-size:19.00px;line-height:19.00px;color:#1f2a63;letter-spacing:-1.403px;">EXCEL</span>
<div class="b" style="left:83px;top:365px;width:1402px;height:25px;background:#8db4e2;"></div>
<div class="b" style="left:83px;top:390px;width:1402px;height:360px;background:#fff;"></div>
<div class="b" style="left:83px;top:749px;width:1402px;height:13px;background:#8db4e2;"></div>
<div class="b" style="left:0px;top:389px;width:1920px;height:1px;background:#a0a0a0;"></div>
<div class="b" style="left:0px;top:246px;width:1px;height:707px;background:#a6a6a6;"></div>
<span class="t" style="left:105.50px;top:370.79px;font-size:15.60px;line-height:15.60px;color:#000;letter-spacing:0.222px;">S.No.</span>
<span class="t" style="left:551.50px;top:370.79px;font-size:15.60px;line-height:15.60px;color:#000;letter-spacing:0.645px;">Attributes</span>
<span class="t" style="left:1017.80px;top:370.79px;font-size:15.60px;line-height:15.60px;color:#000;letter-spacing:-1.217px;">Times </span>
<span class="t" style="left:1065.00px;top:370.79px;font-size:15.60px;line-height:15.60px;color:#000;letter-spacing:0.336px;">Shown</span>
<span class="t" style="left:1138.30px;top:370.79px;font-size:15.60px;line-height:15.60px;color:#000;letter-spacing:-1.217px;">Times </span>
<span class="t" style="left:1185.00px;top:370.79px;font-size:15.60px;line-height:15.60px;color:#000;letter-spacing:0.135px;">Selected </span>
<span class="t" style="left:1252.00px;top:370.79px;font-size:15.60px;line-height:15.60px;color:#000;letter-spacing:-0.058px;">Best</span>
<span class="t" style="left:1312.00px;top:370.79px;font-size:15.60px;line-height:15.60px;color:#000;letter-spacing:-1.194px;">Times </span>
<span class="t" style="left:1358.80px;top:370.79px;font-size:15.60px;line-height:15.60px;color:#000;letter-spacing:0.135px;">Selected </span>
<span class="t" style="left:1424.50px;top:370.79px;font-size:15.60px;line-height:15.60px;color:#000;letter-spacing:1.125px;">Worst</span>
<div class="b" style="left:1126px;top:391px;width:79.0676px;height:26px;background:#63c384;"></div>
<div class="b" style="left:1298px;top:391px;width:79.2px;height:26px;background:#ff555a;"></div>
<span class="t" style="left:120.75px;top:398.19px;font-size:15.60px;line-height:15.60px;color:#000;">1</span>
<span class="t" style="left:170.90px;top:398.19px;font-size:15.60px;line-height:15.60px;color:#000;letter-spacing:0.767px;">Attribute </span>
<span class="t" style="left:240.70px;top:398.19px;font-size:15.60px;line-height:15.60px;color:#000;">1 </span>
<span class="t" style="left:253.40px;top:398.19px;font-size:15.60px;line-height:15.60px;color:#000;">- </span>
<span class="t" style="left:262.20px;top:398.19px;font-size:15.60px;line-height:15.60px;color:#000;letter-spacing:-0.077px;">This </span>
<span class="t" style="left:296.00px;top:398.19px;font-size:15.60px;line-height:15.60px;color:#000;letter-spacing:-0.777px;">is </span>
<span class="t" style="left:310.80px;top:398.19px;font-size:15.60px;line-height:15.60px;color:#000;">a </span>
<span class="t" style="left:324.10px;top:398.19px;font-size:15.60px;line-height:15.60px;color:#000;letter-spacing:0.090px;">long </span>
<span class="t" style="left:359.30px;top:398.19px;font-size:15.60px;line-height:15.60px;color:#000;letter-spacing:0.731px;">text </span>
<span class="t" style="left:392.00px;top:398.19px;font-size:15.60px;line-height:15.60px;color:#000;letter-spacing:0.493px;">description </span>
<span class="t" style="left:477.20px;top:398.19px;font-size:15.60px;line-height:15.60px;color:#000;letter-spacing:0.345px;">placeholders </span>
<span class="t" style="left:574.30px;top:398.19px;font-size:15.60px;line-height:15.60px;color:#000;letter-spacing:-1.010px;">of </span>
<span class="t" style="left:594.00px;top:398.19px;font-size:15.60px;line-height:15.60px;color:#000;letter-spacing:0.377px;">this </span>
<span class="t" style="left:624.20px;top:398.19px;font-size:15.60px;line-height:15.60px;color:#000;letter-spacing:0.852px;">attribute</span>
<span class="t" style="left:1053.00px;top:398.19px;font-size:15.60px;line-height:15.60px;color:#000;letter-spacing:0.388px;">300</span>
<span class="t" style="left:1201.00px;top:398.19px;font-size:15.60px;line-height:15.60px;color:#000;letter-spacing:1.094px;">89</span>
<span class="t" style="left:1381.50px;top:398.19px;font-size:15.60px;line-height:15.60px;color:#000;letter-spacing:1.094px;">72</span>
<div class="b" style="left:1126px;top:421px;width:168.796px;height:26px;background:#63c384;"></div>
<div class="b" style="left:1298px;top:421px;width:20.9px;height:26px;background:#ff555a;"></div>
<span class="t" style="left:120.75px;top:428.19px;font-size:15.60px;line-height:15.60px;color:#000;">2</span>
<span class="t" style="left:170.90px;top:428.19px;font-size:15.60px;line-height:15.60px;color:#000;letter-spacing:0.767px;">Attribute </span>
<span class="t" style="left:240.70px;top:428.19px;font-size:15.60px;line-height:15.60px;color:#000;">2 </span>
<span class="t" style="left:253.40px;top:428.19px;font-size:15.60px;line-height:15.60px;color:#000;">- </span>
<span class="t" style="left:262.20px;top:428.19px;font-size:15.60px;line-height:15.60px;color:#000;letter-spacing:-0.077px;">This </span>
<span class="t" style="left:296.00px;top:428.19px;font-size:15.60px;line-height:15.60px;color:#000;letter-spacing:-0.777px;">is </span>
<span class="t" style="left:310.80px;top:428.19px;font-size:15.60px;line-height:15.60px;color:#000;">a </span>
<span class="t" style="left:324.10px;top:428.19px;font-size:15.60px;line-height:15.60px;color:#000;letter-spacing:0.090px;">long </span>
<span class="t" style="left:359.30px;top:428.19px;font-size:15.60px;line-height:15.60px;color:#000;letter-spacing:0.731px;">text </span>
<span class="t" style="left:392.00px;top:428.19px;font-size:15.60px;line-height:15.60px;color:#000;letter-spacing:0.493px;">description </span>
<span class="t" style="left:477.20px;top:428.19px;font-size:15.60px;line-height:15.60px;color:#000;letter-spacing:0.345px;">placeholders </span>
<span class="t" style="left:574.30px;top:428.19px;font-size:15.60px;line-height:15.60px;color:#000;letter-spacing:-1.010px;">of </span>
<span class="t" style="left:594.00px;top:428.19px;font-size:15.60px;line-height:15.60px;color:#000;letter-spacing:0.377px;">this </span>
<span class="t" style="left:624.20px;top:428.19px;font-size:15.60px;line-height:15.60px;color:#000;letter-spacing:0.852px;">attribute</span>
<span class="t" style="left:1053.00px;top:428.19px;font-size:15.60px;line-height:15.60px;color:#000;letter-spacing:0.388px;">300</span>
<span class="t" style="left:1196.25px;top:428.19px;font-size:15.60px;line-height:15.60px;color:#000;letter-spacing:0.988px;">190</span>
<span class="t" style="left:1381.50px;top:428.19px;font-size:15.60px;line-height:15.60px;color:#000;letter-spacing:1.094px;">19</span>
<div class="b" style="left:1126px;top:451px;width:65.7416px;height:26px;background:#63c384;"></div>
<div class="b" style="left:1298px;top:451px;width:67.1px;height:26px;background:#ff555a;"></div>
<span class="t" style="left:120.75px;top:458.19px;font-size:15.60px;line-height:15.60px;color:#000;">3</span>
<span class="t" style="left:170.90px;top:458.19px;font-size:15.60px;line-height:15.60px;color:#000;letter-spacing:0.767px;">Attribute </span>
<span class="t" style="left:240.70px;top:458.19px;font-size:15.60px;line-height:15.60px;color:#000;">3 </span>
<span class="t" style="left:253.40px;top:458.19px;font-size:15.60px;line-height:15.60px;color:#000;">- </span>
<span class="t" style="left:262.20px;top:458.19px;font-size:15.60px;line-height:15.60px;color:#000;letter-spacing:-0.077px;">This </span>
<span class="t" style="left:296.00px;top:458.19px;font-size:15.60px;line-height:15.60px;color:#000;letter-spacing:-0.777px;">is </span>
<span class="t" style="left:310.80px;top:458.19px;font-size:15.60px;line-height:15.60px;color:#000;">a </span>
<span class="t" style="left:324.10px;top:458.19px;font-size:15.60px;line-height:15.60px;color:#000;letter-spacing:0.090px;">long </span>
<span class="t" style="left:359.30px;top:458.19px;font-size:15.60px;line-height:15.60px;color:#000;letter-spacing:0.731px;">text </span>
<span class="t" style="left:392.00px;top:458.19px;font-size:15.60px;line-height:15.60px;color:#000;letter-spacing:0.493px;">description </span>
<span class="t" style="left:477.20px;top:458.19px;font-size:15.60px;line-height:15.60px;color:#000;letter-spacing:0.345px;">placeholders </span>
<span class="t" style="left:574.30px;top:458.19px;font-size:15.60px;line-height:15.60px;color:#000;letter-spacing:-1.010px;">of </span>
<span class="t" style="left:594.00px;top:458.19px;font-size:15.60px;line-height:15.60px;color:#000;letter-spacing:0.377px;">this </span>
<span class="t" style="left:624.20px;top:458.19px;font-size:15.60px;line-height:15.60px;color:#000;letter-spacing:0.852px;">attribute</span>
<span class="t" style="left:1053.00px;top:458.19px;font-size:15.60px;line-height:15.60px;color:#000;letter-spacing:0.388px;">300</span>
<span class="t" style="left:1201.00px;top:458.19px;font-size:15.60px;line-height:15.60px;color:#000;letter-spacing:1.094px;">74</span>
<span class="t" style="left:1381.50px;top:458.19px;font-size:15.60px;line-height:15.60px;color:#000;letter-spacing:1.094px;">61</span>
<div class="b" style="left:1126px;top:481px;width:40.8664px;height:26px;background:#63c384;"></div>
<div class="b" style="left:1298px;top:481px;width:86.9px;height:26px;background:#ff555a;"></div>
<span class="t" style="left:120.75px;top:488.19px;font-size:15.60px;line-height:15.60px;color:#000;">4</span>
<span class="t" style="left:170.90px;top:488.19px;font-size:15.60px;line-height:15.60px;color:#000;letter-spacing:0.767px;">Attribute </span>
<span class="t" style="left:240.70px;top:488.19px;font-size:15.60px;line-height:15.60px;color:#000;">4 </span>
<span class="t" style="left:253.40px;top:488.19px;font-size:15.60px;line-height:15.60px;color:#000;">- </span>
<span class="t" style="left:262.20px;top:488.19px;font-size:15.60px;line-height:15.60px;color:#000;letter-spacing:-0.077px;">This </span>
<span class="t" style="left:296.00px;top:488.19px;font-size:15.60px;line-height:15.60px;color:#000;letter-spacing:-0.777px;">is </span>
<span class="t" style="left:310.80px;top:488.19px;font-size:15.60px;line-height:15.60px;color:#000;">a </span>
<span class="t" style="left:324.10px;top:488.19px;font-size:15.60px;line-height:15.60px;color:#000;letter-spacing:0.090px;">long </span>
<span class="t" style="left:359.30px;top:488.19px;font-size:15.60px;line-height:15.60px;color:#000;letter-spacing:0.731px;">text </span>
<span class="t" style="left:392.00px;top:488.19px;font-size:15.60px;line-height:15.60px;color:#000;letter-spacing:0.493px;">description </span>
<span class="t" style="left:477.20px;top:488.19px;font-size:15.60px;line-height:15.60px;color:#000;letter-spacing:0.345px;">placeholders </span>
<span class="t" style="left:574.30px;top:488.19px;font-size:15.60px;line-height:15.60px;color:#000;letter-spacing:-1.010px;">of </span>
<span class="t" style="left:594.00px;top:488.19px;font-size:15.60px;line-height:15.60px;color:#000;letter-spacing:0.377px;">this </span>
<span class="t" style="left:624.20px;top:488.19px;font-size:15.60px;line-height:15.60px;color:#000;letter-spacing:0.852px;">attribute</span>
<span class="t" style="left:1053.00px;top:488.19px;font-size:15.60px;line-height:15.60px;color:#000;letter-spacing:0.388px;">300</span>
<span class="t" style="left:1201.00px;top:488.19px;font-size:15.60px;line-height:15.60px;color:#000;letter-spacing:1.094px;">46</span>
<span class="t" style="left:1381.50px;top:488.19px;font-size:15.60px;line-height:15.60px;color:#000;letter-spacing:1.094px;">79</span>
<div class="b" style="left:1126px;top:511px;width:48.862px;height:26px;background:#63c384;"></div>
<div class="b" style="left:1298px;top:511px;width:80.3px;height:26px;background:#ff555a;"></div>
<span class="t" style="left:120.75px;top:518.19px;font-size:15.60px;line-height:15.60px;color:#000;">5</span>
<span class="t" style="left:170.90px;top:518.19px;font-size:15.60px;line-height:15.60px;color:#000;letter-spacing:0.767px;">Attribute </span>
<span class="t" style="left:240.70px;top:518.19px;font-size:15.60px;line-height:15.60px;color:#000;">5 </span>
<span class="t" style="left:253.40px;top:518.19px;font-size:15.60px;line-height:15.60px;color:#000;">- </span>
<span class="t" style="left:262.20px;top:518.19px;font-size:15.60px;line-height:15.60px;color:#000;letter-spacing:-0.077px;">This </span>
<span class="t" style="left:296.00px;top:518.19px;font-size:15.60px;line-height:15.60px;color:#000;letter-spacing:-0.777px;">is </span>
<span class="t" style="left:310.80px;top:518.19px;font-size:15.60px;line-height:15.60px;color:#000;">a </span>
<span class="t" style="left:324.10px;top:518.19px;font-size:15.60px;line-height:15.60px;color:#000;letter-spacing:0.090px;">long </span>
<span class="t" style="left:359.30px;top:518.19px;font-size:15.60px;line-height:15.60px;color:#000;letter-spacing:0.731px;">text </span>
<span class="t" style="left:392.00px;top:518.19px;font-size:15.60px;line-height:15.60px;color:#000;letter-spacing:0.493px;">description </span>
<span class="t" style="left:477.20px;top:518.19px;font-size:15.60px;line-height:15.60px;color:#000;letter-spacing:0.345px;">placeholders </span>
<span class="t" style="left:574.30px;top:518.19px;font-size:15.60px;line-height:15.60px;color:#000;letter-spacing:-1.010px;">of </span>
<span class="t" style="left:594.00px;top:518.19px;font-size:15.60px;line-height:15.60px;color:#000;letter-spacing:0.377px;">this </span>
<span class="t" style="left:624.20px;top:518.19px;font-size:15.60px;line-height:15.60px;color:#000;letter-spacing:0.852px;">attribute</span>
<span class="t" style="left:1053.00px;top:518.19px;font-size:15.60px;line-height:15.60px;color:#000;letter-spacing:0.388px;">300</span>
<span class="t" style="left:1201.00px;top:518.19px;font-size:15.60px;line-height:15.60px;color:#000;letter-spacing:1.094px;">55</span>
<span class="t" style="left:1381.50px;top:518.19px;font-size:15.60px;line-height:15.60px;color:#000;letter-spacing:1.094px;">73</span>
<div class="b" style="left:1126px;top:541px;width:14.2144px;height:26px;background:#63c384;"></div>
<div class="b" style="left:1298px;top:541px;width:133.1px;height:26px;background:#ff555a;"></div>
<span class="t" style="left:120.75px;top:548.19px;font-size:15.60px;line-height:15.60px;color:#000;">6</span>
<span class="t" style="left:170.90px;top:548.19px;font-size:15.60px;line-height:15.60px;color:#000;letter-spacing:0.767px;">Attribute </span>
<span class="t" style="left:240.70px;top:548.19px;font-size:15.60px;line-height:15.60px;color:#000;">6 </span>
<span class="t" style="left:258.20px;top:548.19px;font-size:15.60px;line-height:15.60px;color:#000;">- </span>
<span class="t" style="left:267.00px;top:548.19px;font-size:15.60px;line-height:15.60px;color:#000;letter-spacing:-0.077px;">This </span>
<span class="t" style="left:300.80px;top:548.19px;font-size:15.60px;line-height:15.60px;color:#000;letter-spacing:-0.777px;">is </span>
<span class="t" style="left:315.60px;top:548.19px;font-size:15.60px;line-height:15.60px;color:#000;">a </span>
<span class="t" style="left:328.90px;top:548.19px;font-size:15.60px;line-height:15.60px;color:#000;letter-spacing:0.090px;">long </span>
<span class="t" style="left:364.10px;top:548.19px;font-size:15.60px;line-height:15.60px;color:#000;letter-spacing:0.731px;">text </span>
<span class="t" style="left:396.80px;top:548.19px;font-size:15.60px;line-height:15.60px;color:#000;letter-spacing:0.493px;">description </span>
<span class="t" style="left:482.00px;top:548.19px;font-size:15.60px;line-height:15.60px;color:#000;letter-spacing:0.345px;">placeholders </span>
<span class="t" style="left:579.10px;top:548.19px;font-size:15.60px;line-height:15.60px;color:#000;letter-spacing:-1.010px;">of </span>
<span class="t" style="left:598.80px;top:548.19px;font-size:15.60px;line-height:15.60px;color:#000;letter-spacing:0.377px;">this </span>
<span class="t" style="left:629.00px;top:548.19px;font-size:15.60px;line-height:15.60px;color:#000;letter-spacing:0.852px;">attribute</span>
<span class="t" style="left:1053.00px;top:548.19px;font-size:15.60px;line-height:15.60px;color:#000;letter-spacing:0.388px;">300</span>
<span class="t" style="left:1201.00px;top:548.19px;font-size:15.60px;line-height:15.60px;color:#000;letter-spacing:1.094px;">16</span>
<span class="t" style="left:1376.75px;top:548.19px;font-size:15.60px;line-height:15.60px;color:#000;letter-spacing:0.988px;">121</span>
<div class="b" style="left:1126px;top:571px;width:6.2188px;height:26px;background:#63c384;"></div>
<div class="b" style="left:1298px;top:571px;width:185.9px;height:26px;background:#ff555a;"></div>
<span class="t" style="left:120.75px;top:578.19px;font-size:15.60px;line-height:15.60px;color:#000;">7</span>
<span class="t" style="left:170.90px;top:578.19px;font-size:15.60px;line-height:15.60px;color:#000;letter-spacing:0.767px;">Attribute </span>
<span class="t" style="left:240.70px;top:578.19px;font-size:15.60px;line-height:15.60px;color:#000;">7 </span>
<span class="t" style="left:253.40px;top:578.19px;font-size:15.60px;line-height:15.60px;color:#000;">- </span>
<span class="t" style="left:262.20px;top:578.19px;font-size:15.60px;line-height:15.60px;color:#000;letter-spacing:-0.077px;">This </span>
<span class="t" style="left:296.00px;top:578.19px;font-size:15.60px;line-height:15.60px;color:#000;letter-spacing:-0.777px;">is </span>
<span class="t" style="left:310.80px;top:578.19px;font-size:15.60px;line-height:15.60px;color:#000;">a </span>
<span class="t" style="left:324.10px;top:578.19px;font-size:15.60px;line-height:15.60px;color:#000;letter-spacing:0.090px;">long </span>
<span class="t" style="left:359.30px;top:578.19px;font-size:15.60px;line-height:15.60px;color:#000;letter-spacing:0.731px;">text </span>
<span class="t" style="left:392.00px;top:578.19px;font-size:15.60px;line-height:15.60px;color:#000;letter-spacing:0.493px;">description </span>
<span class="t" style="left:477.20px;top:578.19px;font-size:15.60px;line-height:15.60px;color:#000;letter-spacing:0.345px;">placeholders </span>
<span class="t" style="left:574.30px;top:578.19px;font-size:15.60px;line-height:15.60px;color:#000;letter-spacing:-1.010px;">of </span>
<span class="t" style="left:594.00px;top:578.19px;font-size:15.60px;line-height:15.60px;color:#000;letter-spacing:0.377px;">this </span>
<span class="t" style="left:624.20px;top:578.19px;font-size:15.60px;line-height:15.60px;color:#000;letter-spacing:0.852px;">attribute</span>
<span class="t" style="left:1053.00px;top:578.19px;font-size:15.60px;line-height:15.60px;color:#000;letter-spacing:0.388px;">300</span>
<span class="t" style="left:1205.75px;top:578.19px;font-size:15.60px;line-height:15.60px;color:#000;">7</span>
<span class="t" style="left:1376.75px;top:578.19px;font-size:15.60px;line-height:15.60px;color:#000;letter-spacing:0.988px;">169</span>
<div class="b" style="left:1126px;top:601px;width:95.9472px;height:26px;background:#63c384;"></div>
<div class="b" style="left:1298px;top:601px;width:31.9px;height:26px;background:#ff555a;"></div>
<span class="t" style="left:120.75px;top:608.19px;font-size:15.60px;line-height:15.60px;color:#000;">8</span>
<span class="t" style="left:170.90px;top:608.19px;font-size:15.60px;line-height:15.60px;color:#000;letter-spacing:0.767px;">Attribute </span>
<span class="t" style="left:240.70px;top:608.19px;font-size:15.60px;line-height:15.60px;color:#000;">8 </span>
<span class="t" style="left:253.40px;top:608.19px;font-size:15.60px;line-height:15.60px;color:#000;">- </span>
<span class="t" style="left:262.20px;top:608.19px;font-size:15.60px;line-height:15.60px;color:#000;letter-spacing:-0.077px;">This </span>
<span class="t" style="left:296.00px;top:608.19px;font-size:15.60px;line-height:15.60px;color:#000;letter-spacing:-0.777px;">is </span>
<span class="t" style="left:310.80px;top:608.19px;font-size:15.60px;line-height:15.60px;color:#000;">a </span>
<span class="t" style="left:324.10px;top:608.19px;font-size:15.60px;line-height:15.60px;color:#000;letter-spacing:0.090px;">long </span>
<span class="t" style="left:359.30px;top:608.19px;font-size:15.60px;line-height:15.60px;color:#000;letter-spacing:0.731px;">text </span>
<span class="t" style="left:392.00px;top:608.19px;font-size:15.60px;line-height:15.60px;color:#000;letter-spacing:0.493px;">description </span>
<span class="t" style="left:477.20px;top:608.19px;font-size:15.60px;line-height:15.60px;color:#000;letter-spacing:0.345px;">placeholders </span>
<span class="t" style="left:574.30px;top:608.19px;font-size:15.60px;line-height:15.60px;color:#000;letter-spacing:-1.010px;">of </span>
<span class="t" style="left:594.00px;top:608.19px;font-size:15.60px;line-height:15.60px;color:#000;letter-spacing:0.377px;">this </span>
<span class="t" style="left:624.20px;top:608.19px;font-size:15.60px;line-height:15.60px;color:#000;letter-spacing:0.852px;">attribute</span>
<span class="t" style="left:1053.00px;top:608.19px;font-size:15.60px;line-height:15.60px;color:#000;letter-spacing:0.388px;">300</span>
<span class="t" style="left:1196.25px;top:608.19px;font-size:15.60px;line-height:15.60px;color:#000;letter-spacing:0.988px;">108</span>
<span class="t" style="left:1381.50px;top:608.19px;font-size:15.60px;line-height:15.60px;color:#000;letter-spacing:1.094px;">29</span>
<div class="b" style="left:1126px;top:631px;width:119.934px;height:26px;background:#63c384;"></div>
<div class="b" style="left:1298px;top:631px;width:24.2px;height:26px;background:#ff555a;"></div>
<span class="t" style="left:120.75px;top:638.19px;font-size:15.60px;line-height:15.60px;color:#000;">9</span>
<span class="t" style="left:170.90px;top:638.19px;font-size:15.60px;line-height:15.60px;color:#000;letter-spacing:0.767px;">Attribute </span>
<span class="t" style="left:240.70px;top:638.19px;font-size:15.60px;line-height:15.60px;color:#000;">9 </span>
<span class="t" style="left:253.40px;top:638.19px;font-size:15.60px;line-height:15.60px;color:#000;">- </span>
<span class="t" style="left:262.20px;top:638.19px;font-size:15.60px;line-height:15.60px;color:#000;letter-spacing:-0.077px;">This </span>
<span class="t" style="left:296.00px;top:638.19px;font-size:15.60px;line-height:15.60px;color:#000;letter-spacing:-0.777px;">is </span>
<span class="t" style="left:310.80px;top:638.19px;font-size:15.60px;line-height:15.60px;color:#000;">a </span>
<span class="t" style="left:324.10px;top:638.19px;font-size:15.60px;line-height:15.60px;color:#000;letter-spacing:0.090px;">long </span>
<span class="t" style="left:359.30px;top:638.19px;font-size:15.60px;line-height:15.60px;color:#000;letter-spacing:0.731px;">text </span>
<span class="t" style="left:392.00px;top:638.19px;font-size:15.60px;line-height:15.60px;color:#000;letter-spacing:0.493px;">description </span>
<span class="t" style="left:477.20px;top:638.19px;font-size:15.60px;line-height:15.60px;color:#000;letter-spacing:0.345px;">placeholders </span>
<span class="t" style="left:574.30px;top:638.19px;font-size:15.60px;line-height:15.60px;color:#000;letter-spacing:-1.010px;">of </span>
<span class="t" style="left:594.00px;top:638.19px;font-size:15.60px;line-height:15.60px;color:#000;letter-spacing:0.377px;">this </span>
<span class="t" style="left:624.20px;top:638.19px;font-size:15.60px;line-height:15.60px;color:#000;letter-spacing:0.852px;">attribute</span>
<span class="t" style="left:1053.00px;top:638.19px;font-size:15.60px;line-height:15.60px;color:#000;letter-spacing:0.388px;">300</span>
<span class="t" style="left:1196.25px;top:638.19px;font-size:15.60px;line-height:15.60px;color:#000;letter-spacing:0.988px;">135</span>
<span class="t" style="left:1381.50px;top:638.19px;font-size:15.60px;line-height:15.60px;color:#000;letter-spacing:1.094px;">22</span>
<div class="b" style="left:1126px;top:661px;width:95.9472px;height:26px;background:#63c384;"></div>
<div class="b" style="left:1298px;top:661px;width:28.6px;height:26px;background:#ff555a;"></div>
<span class="t" style="left:116.00px;top:668.19px;font-size:15.60px;line-height:15.60px;color:#000;letter-spacing:1.094px;">10</span>
<span class="t" style="left:170.90px;top:668.19px;font-size:15.60px;line-height:15.60px;color:#000;letter-spacing:0.767px;">Attribute </span>
<span class="t" style="left:240.40px;top:668.19px;font-size:15.60px;line-height:15.60px;color:#000;letter-spacing:0.227px;">10 </span>
<span class="t" style="left:262.50px;top:668.19px;font-size:15.60px;line-height:15.60px;color:#000;">- </span>
<span class="t" style="left:271.30px;top:668.19px;font-size:15.60px;line-height:15.60px;color:#000;letter-spacing:-0.077px;">This </span>
<span class="t" style="left:305.10px;top:668.19px;font-size:15.60px;line-height:15.60px;color:#000;letter-spacing:-0.777px;">is </span>
<span class="t" style="left:319.90px;top:668.19px;font-size:15.60px;line-height:15.60px;color:#000;">a </span>
<span class="t" style="left:333.20px;top:668.19px;font-size:15.60px;line-height:15.60px;color:#000;letter-spacing:0.090px;">long </span>
<span class="t" style="left:368.40px;top:668.19px;font-size:15.60px;line-height:15.60px;color:#000;letter-spacing:0.731px;">text </span>
<span class="t" style="left:401.10px;top:668.19px;font-size:15.60px;line-height:15.60px;color:#000;letter-spacing:0.493px;">description </span>
<span class="t" style="left:486.30px;top:668.19px;font-size:15.60px;line-height:15.60px;color:#000;letter-spacing:0.345px;">placeholders </span>
<span class="t" style="left:583.40px;top:668.19px;font-size:15.60px;line-height:15.60px;color:#000;letter-spacing:-1.010px;">of </span>
<span class="t" style="left:603.10px;top:668.19px;font-size:15.60px;line-height:15.60px;color:#000;letter-spacing:0.377px;">this </span>
<span class="t" style="left:633.30px;top:668.19px;font-size:15.60px;line-height:15.60px;color:#000;letter-spacing:0.852px;">attribute</span>
<span class="t" style="left:1053.00px;top:668.19px;font-size:15.60px;line-height:15.60px;color:#000;letter-spacing:0.388px;">300</span>
<span class="t" style="left:1196.25px;top:668.19px;font-size:15.60px;line-height:15.60px;color:#000;letter-spacing:0.988px;">108</span>
<span class="t" style="left:1381.50px;top:668.19px;font-size:15.60px;line-height:15.60px;color:#000;letter-spacing:1.094px;">26</span>
<div class="b" style="left:1126px;top:691px;width:41.7548px;height:26px;background:#63c384;"></div>
<div class="b" style="left:1298px;top:691px;width:101.2px;height:26px;background:#ff555a;"></div>
<span class="t" style="left:116.00px;top:698.19px;font-size:15.60px;line-height:15.60px;color:#000;letter-spacing:1.875px;">11</span>
<span class="t" style="left:170.90px;top:698.19px;font-size:15.60px;line-height:15.60px;color:#000;letter-spacing:0.767px;">Attribute </span>
<span class="t" style="left:240.40px;top:698.19px;font-size:15.60px;line-height:15.60px;color:#000;letter-spacing:1.008px;">11 </span>
<span class="t" style="left:262.50px;top:698.19px;font-size:15.60px;line-height:15.60px;color:#000;">- </span>
<span class="t" style="left:271.30px;top:698.19px;font-size:15.60px;line-height:15.60px;color:#000;letter-spacing:-0.077px;">This </span>
<span class="t" style="left:305.10px;top:698.19px;font-size:15.60px;line-height:15.60px;color:#000;letter-spacing:-0.777px;">is </span>
<span class="t" style="left:319.90px;top:698.19px;font-size:15.60px;line-height:15.60px;color:#000;">a </span>
<span class="t" style="left:333.20px;top:698.19px;font-size:15.60px;line-height:15.60px;color:#000;letter-spacing:0.090px;">long </span>
<span class="t" style="left:368.40px;top:698.19px;font-size:15.60px;line-height:15.60px;color:#000;letter-spacing:0.731px;">text </span>
<span class="t" style="left:401.10px;top:698.19px;font-size:15.60px;line-height:15.60px;color:#000;letter-spacing:0.493px;">description </span>
<span class="t" style="left:486.30px;top:698.19px;font-size:15.60px;line-height:15.60px;color:#000;letter-spacing:0.345px;">placeholders </span>
<span class="t" style="left:583.40px;top:698.19px;font-size:15.60px;line-height:15.60px;color:#000;letter-spacing:-1.010px;">of </span>
<span class="t" style="left:603.10px;top:698.19px;font-size:15.60px;line-height:15.60px;color:#000;letter-spacing:0.377px;">this </span>
<span class="t" style="left:633.30px;top:698.19px;font-size:15.60px;line-height:15.60px;color:#000;letter-spacing:0.852px;">attribute</span>
<span class="t" style="left:1053.00px;top:698.19px;font-size:15.60px;line-height:15.60px;color:#000;letter-spacing:0.388px;">300</span>
<span class="t" style="left:1201.00px;top:698.19px;font-size:15.60px;line-height:15.60px;color:#000;letter-spacing:1.094px;">47</span>
<span class="t" style="left:1381.50px;top:698.19px;font-size:15.60px;line-height:15.60px;color:#000;letter-spacing:1.094px;">92</span>
<div class="b" style="left:1126px;top:721px;width:22.21px;height:26px;background:#63c384;"></div>
<div class="b" style="left:1298px;top:721px;width:150.7px;height:26px;background:#ff555a;"></div>
<span class="t" style="left:116.00px;top:728.19px;font-size:15.60px;line-height:15.60px;color:#000;letter-spacing:1.094px;">12</span>
<span class="t" style="left:170.90px;top:728.19px;font-size:15.60px;line-height:15.60px;color:#000;letter-spacing:0.767px;">Attribute </span>
<span class="t" style="left:240.40px;top:728.19px;font-size:15.60px;line-height:15.60px;color:#000;letter-spacing:0.227px;">12 </span>
<span class="t" style="left:262.50px;top:728.19px;font-size:15.60px;line-height:15.60px;color:#000;">- </span>
<span class="t" style="left:271.30px;top:728.19px;font-size:15.60px;line-height:15.60px;color:#000;letter-spacing:-0.077px;">This </span>
<span class="t" style="left:305.10px;top:728.19px;font-size:15.60px;line-height:15.60px;color:#000;letter-spacing:-0.777px;">is </span>
<span class="t" style="left:319.90px;top:728.19px;font-size:15.60px;line-height:15.60px;color:#000;">a </span>
<span class="t" style="left:333.20px;top:728.19px;font-size:15.60px;line-height:15.60px;color:#000;letter-spacing:0.090px;">long </span>
<span class="t" style="left:368.40px;top:728.19px;font-size:15.60px;line-height:15.60px;color:#000;letter-spacing:0.731px;">text </span>
<span class="t" style="left:401.10px;top:728.19px;font-size:15.60px;line-height:15.60px;color:#000;letter-spacing:0.493px;">description </span>
<span class="t" style="left:486.30px;top:728.19px;font-size:15.60px;line-height:15.60px;color:#000;letter-spacing:0.345px;">placeholders </span>
<span class="t" style="left:583.40px;top:728.19px;font-size:15.60px;line-height:15.60px;color:#000;letter-spacing:-1.010px;">of </span>
<span class="t" style="left:603.10px;top:728.19px;font-size:15.60px;line-height:15.60px;color:#000;letter-spacing:0.377px;">this </span>
<span class="t" style="left:633.30px;top:728.19px;font-size:15.60px;line-height:15.60px;color:#000;letter-spacing:0.852px;">attribute</span>
<span class="t" style="left:1053.00px;top:728.19px;font-size:15.60px;line-height:15.60px;color:#000;letter-spacing:0.388px;">300</span>
<span class="t" style="left:1201.00px;top:728.19px;font-size:15.60px;line-height:15.60px;color:#000;letter-spacing:1.094px;">25</span>
<span class="t" style="left:1376.75px;top:728.19px;font-size:15.60px;line-height:15.60px;color:#000;letter-spacing:0.988px;">137</span>
<div class="b" style="left:0px;top:953px;width:1920px;height:35px;background:#e6e6e6;"></div>
<div class="b" style="left:1919px;top:246px;width:1px;height:707px;background:#8a8a8a;"></div>
<div class="b" style="left:0px;top:953px;width:1889px;height:1px;background:#808080;"></div>
<div class="b" style="left:0px;top:987px;width:1920px;height:2px;background:#c4c4c4;"></div>
<div class="b" style="left:0px;top:989px;width:1920px;height:31.5px;background:#f3f2f1;"></div>
<svg style="left:28px;top:963.7px;" width="8" height="12" viewBox="0 0 8 12"><path d="M7.500 0.500v11L1 6z" fill="#c2c2c2"/></svg>
<svg style="left:62px;top:963.7px;" width="8" height="12" viewBox="0 0 8 12"><path d="M0.500 0.500v11L7 6z" fill="#c2c2c2"/></svg>
<div class="b" style="left:117.9px;top:958px;width:1.2px;height:25px;background:#ababab;"></div>
<div class="b" style="left:187.9px;top:958px;width:1.2px;height:25px;background:#ababab;"></div>
<div class="b" style="left:288.9px;top:958px;width:1.2px;height:25px;background:#ababab;"></div>
<div class="b" style="left:408.9px;top:958px;width:1.2px;height:25px;background:#ababab;"></div>
<div class="b" style="left:578.9px;top:958px;width:1.2px;height:25px;background:#ababab;"></div>
<div class="b" style="left:1080.9px;top:958px;width:1.2px;height:25px;background:#ababab;"></div>
<div class="b" style="left:1304.9px;top:958px;width:1.2px;height:25px;background:#ababab;"></div>
<div class="b" style="left:743.5px;top:953px;width:159px;height:30.5px;background:#f1f1f1;"></div>
<div class="b" style="left:743.5px;top:980.8px;width:159px;height:2.8px;background:#217346;"></div>
<div class="b" style="left:743px;top:955px;width:1px;height:28.5px;background:#c6c6c6;"></div>
<div class="b" style="left:902px;top:955px;width:1px;height:28.5px;background:#c6c6c6;"></div>
<span class="t" style="left:131.50px;top:957.87px;font-size:20.00px;line-height:20.00px;color:#444;letter-spacing:0.549px;">Intro</span>
<span class="t" style="left:201.50px;top:957.87px;font-size:20.00px;line-height:20.00px;color:#444;letter-spacing:-0.565px;">ReadMe</span>
<span class="t" style="left:305.00px;top:957.87px;font-size:20.00px;line-height:20.00px;color:#444;letter-spacing:0.265px;">Attributes</span>
<span class="t" style="left:428.00px;top:957.87px;font-size:20.00px;line-height:20.00px;color:#444;letter-spacing:0.291px;">Maxdiff </span>
<span class="t" style="left:498.50px;top:957.87px;font-size:20.00px;line-height:20.00px;color:#444;letter-spacing:-0.321px;">Design</span>
<span class="t" style="left:596.00px;top:957.87px;font-size:20.00px;line-height:20.00px;color:#444;letter-spacing:-0.500px;">Data </span>
<span class="t" style="left:642.00px;top:957.87px;font-size:20.00px;line-height:20.00px;color:#444;letter-spacing:-0.397px;">Summary</span>
<span class="t" style="left:923.00px;top:957.87px;font-size:20.00px;line-height:20.00px;color:#444;letter-spacing:0.491px;">Maxdiff </span>
<span class="t" style="left:994.10px;top:957.87px;font-size:20.00px;line-height:20.00px;color:#444;letter-spacing:0.206px;">Utilities</span>
<span class="t" style="left:1104.90px;top:957.87px;font-size:20.00px;line-height:20.00px;color:#444;letter-spacing:0.321px;">Max </span>
<span class="t" style="left:1147.20px;top:957.87px;font-size:20.00px;line-height:20.00px;color:#444;letter-spacing:0.560px;">Diff </span>
<span class="t" style="left:1183.70px;top:957.87px;font-size:20.00px;line-height:20.00px;color:#444;letter-spacing:-0.909px;">Preferences</span>
<span class="t" style="left:754.20px;top:957.87px;font-size:20.00px;line-height:20.00px;color:#217346;font-weight:700;letter-spacing:-0.416px;">Counts </span>
<span class="t" style="left:826.40px;top:957.87px;font-size:20.00px;line-height:20.00px;color:#217346;font-weight:700;letter-spacing:-0.137px;">Report</span>
<svg style="left:1344px;top:958px;" width="23" height="23" viewBox="0 0 23 23"><circle cx="11.500" cy="11.500" r="10.300" fill="none" stroke="#c2c2c2" stroke-width="1.3"/><path d="M11.500 6.500v10M6.500 11.500h10" stroke="#c2c2c2" stroke-width="1.5"/></svg>
<svg style="left:12px;top:994px;" width="23" height="21" viewBox="0 0 23 21"><path d="M1 1h18v3.500M1 1v16h7" fill="none" stroke="#444" stroke-width="1.4"/><path d="M1 4.500h18" stroke="#444" stroke-width="1.2"/><path d="M4 8.500h5M4 12h4" stroke="#444" stroke-width="1.2"/><circle cx="15.500" cy="13.500" r="6" fill="none" stroke="#444" stroke-width="1.4"/><circle cx="15.500" cy="13.500" r="2.500" fill="#444"/></svg>
<div class="b" style="left:1468.5px;top:988.3px;width:59px;height:31.7px;background:#c8c6c4;"></div>
<svg style="left:1487px;top:993px;" width="21" height="19" viewBox="0 0 21 19"><rect x="0.700" y="0.700" width="19.600" height="17.600" fill="none" stroke="#444" stroke-width="1.4"/><path d="M7.200 1v17M13.800 1v17M1 6.500h19M1 12.300h19" stroke="#444" stroke-width="1.3"/></svg>
<svg style="left:1547px;top:993px;" width="21" height="19" viewBox="0 0 21 19"><rect x="0.700" y="0.700" width="19.600" height="17.600" fill="none" stroke="#444" stroke-width="1.4"/><rect x="5" y="5" width="11" height="9" fill="none" stroke="#444" stroke-width="1.2"/><path d="M7 7.500h7M7 9.600h7M7 11.700h7" stroke="#444" stroke-width="1"/></svg>
<svg style="left:1607px;top:993px;" width="21" height="19" viewBox="0 0 21 19"><rect x="0.700" y="0.700" width="19.600" height="17.600" fill="none" stroke="#444" stroke-width="1.4"/><path d="M7 1v10M13.500 1v10M1 10.500h13" fill="none" stroke="#444" stroke-width="1.3"/></svg>
<div class="b" style="left:1658px;top:1002.3px;width:11px;height:1.4px;background:#444;"></div>
<div class="b" style="left:1679px;top:1002.3px;width:147px;height:1.4px;background:#a6a6a6;"></div>
<div class="b" style="left:1749px;top:995px;width:8px;height:17.5px;background:#777;"></div>
<div class="b" style="left:1836px;top:1002.3px;width:11px;height:1.4px;background:#444;"></div>
<div class="b" style="left:1840.8px;top:997.5px;width:1.4px;height:11px;background:#444;"></div>
<span class="t" style="left:1868.50px;top:995.88px;font-size:15.50px;line-height:15.50px;color:#444;letter-spacing:-0.045px;">100%</span>
<div class="b" style="left:0;top:1020.5px;width:1920px;height:59.5px;background:linear-gradient(90deg,#d8d8c6 0,#dcd8c6 12%,#e3dccb 30%,#e6dfcf 50%,#e2dccb 75%,#dcd8c6 100%)"></div>
<svg style="left:24px;top:1038px;" width="25" height="25" viewBox="0 0 25 25"><path d="M0 3.500L10.200 2.100v9.800H0zM11.500 1.900L25 0v11.900H11.500zM0 13.100h10.200v9.800L0 21.500zM11.500 13.100H25V25l-13.500-1.900z" fill="#000"/></svg>
<div class="b" style="left:72px;top:1020.5px;width:516px;height:59.5px;background:#fff;border:2px solid #cbcbcb"></div>
<svg style="left:90px;top:1037px;" width="26" height="27" viewBox="0 0 26 27"><circle cx="15.500" cy="9.500" r="8" fill="none" stroke="#111" stroke-width="1.8"/><path d="M10 15.500L1 25.500" stroke="#111" stroke-width="1.8"/></svg>
<span class="t" style="left:131.70px;top:1041.11px;font-size:23.50px;line-height:23.50px;color:#222;letter-spacing:-0.901px;">Type </span>
<span class="t" style="left:186.50px;top:1041.11px;font-size:23.50px;line-height:23.50px;color:#222;letter-spacing:-0.785px;">here </span>
<span class="t" style="left:237.60px;top:1041.11px;font-size:23.50px;line-height:23.50px;color:#222;letter-spacing:0.127px;">to </span>
<span class="t" style="left:263.90px;top:1041.11px;font-size:23.50px;line-height:23.50px;color:#222;letter-spacing:-0.899px;">search</span>
<div class="b" style="left:596.6px;top:1032px;width:1.4px;height:35.7px;background:#111;"></div>
<div class="b" style="left:600px;top:1032px;width:1.4px;height:35.7px;background:#111;"></div>
<div class="b" style="left:686px;top:1020px;width:57px;height:60px;background:rgba(255,255,255,.45);"></div>
<div class="b" style="left:743px;top:1020.5px;width:2px;height:59.5px;background:rgba(120,120,105,.22);"></div>
<div class="b" style="left:626px;top:1076.5px;width:48px;height:3.5px;background:#0a78d6;"></div>
<div class="b" style="left:686px;top:1076.5px;width:59px;height:3.5px;background:#0a78d6;"></div>
<div class="b" style="left:757.5px;top:1076.5px;width:52.5px;height:3.5px;background:#0a78d6;"></div>
<div class="b" style="left:824px;top:1076.5px;width:52px;height:3.5px;background:#0a78d6;"></div>
<div class="b" style="left:890px;top:1076.5px;width:52px;height:3.5px;background:#0a78d6;"></div>
<div class="b" style="left:956px;top:1076.5px;width:52px;height:3.5px;background:#0a78d6;"></div>
<div class="b" style="left:1022px;top:1076.5px;width:51px;height:3.5px;background:#0a78d6;"></div>
<div class="b" style="left:1087px;top:1076.5px;width:51px;height:3.5px;background:#0a78d6;"></div>
<div class="b" style="left:1152px;top:1076.5px;width:51px;height:3.5px;background:#0a78d6;"></div>
<div class="b" style="left:1217px;top:1076.5px;width:51px;height:3.5px;background:#0a78d6;"></div>
<div class="b" style="left:1282px;top:1076.5px;width:51px;height:3.5px;background:#0a78d6;"></div>
<div class="b" style="left:1347px;top:1076.5px;width:51px;height:3.5px;background:#0a78d6;"></div>
<div class="b" style="left:1412px;top:1076.5px;width:51px;height:3.5px;background:#0a78d6;"></div>
<div class="b" style="left:665px;top:1076.5px;width:13px;height:3.5px;background:#5fa6e4;"></div>
<div class="b" style="left:745px;top:1076.5px;width:5.5px;height:3.5px;background:#5fa6e4;"></div>
<svg style="left:636px;top:1035px;" width="30" height="30" viewBox="0 0 30 30"><path d="M0 5a2 2 0 0 1 2-2h9l3 3h14a2 2 0 0 1 2 2v3H0z" fill="#e9a723"/><rect x="0" y="8.500" width="30" height="19" rx="1.500" fill="#ffd869"/><path d="M5 27.500v-8.500h20v8.500h-5v-4.500h-10v4.500z" fill="#3b8fdd"/><rect x="5" y="17" width="20" height="3" fill="#5aa6ea"/></svg>
<svg style="left:697px;top:1033px;" width="37" height="34" viewBox="0 0 37 34"><rect x="9.300" y="0.900" width="26.700" height="31.800" rx="1.800" fill="#21a366"/><path d="M22.500 0.900h11.700a1.800 1.800 0 0 1 1.800 1.800v6.200H22.500z" fill="#33c481"/><rect x="9.300" y="16.800" width="26.700" height="8" fill="#107c41"/><path d="M9.300 24.800h26.700v6.100a1.800 1.800 0 0 1-1.800 1.800H11.100a1.800 1.800 0 0 1-1.800-1.800z" fill="#185c37"/><rect x="1.800" y="8.700" width="18" height="18" rx="1.500" fill="#000" opacity=".18"/><rect x="0.900" y="7.900" width="18.100" height="18" rx="1.500" fill="#107c41"/></svg>
<span class="t" style="left:702.30px;top:1043.37px;font-size:13.50px;line-height:13.50px;color:#fff;font-weight:700;">X</span>
<svg style="left:767px;top:1034px;" width="33" height="33" viewBox="0 0 33 33"><circle cx="16.500" cy="16.500" r="16" fill="#e33b2e"/><path d="M16.500 16.500L2.600 8.500A16 16 0 0 0 11 31.500z" fill="#2da94f"/><path d="M16.500 16.500L11 31.500A16 16 0 0 0 32.500 16.500A16 16 0 0 0 31 10z" fill="#fcc934"/><path d="M2.600 8.500A16 16 0 0 1 31 10H16.500z" fill="#e33b2e"/><circle cx="16.500" cy="16.500" r="7.500" fill="#fff"/><circle cx="16.500" cy="16.500" r="5.800" fill="#4c8bf5"/></svg>
<svg style="left:832px;top:1034px;" width="40" height="38" viewBox="0 0 40 38"><rect x="10" y="0" width="23" height="26" rx="2" fill="#1490df"/><rect x="10" y="0" width="11.500" height="8.500" fill="#0364b8"/><rect x="21.500" y="0" width="11.500" height="8.500" fill="#0a6cc4"/><rect x="21.500" y="6" width="11.500" height="11" fill="#35b8f1"/><rect x="27" y="6" width="6" height="8" fill="#50d9ff"/><rect x="10" y="8.500" width="11.500" height="8.500" fill="#0078d4"/><rect x="10" y="17" width="11.500" height="9" fill="#064a8c"/><rect x="21.500" y="17" width="11.500" height="9" fill="#0a63ad"/><rect x="0" y="7" width="18" height="18" rx="1.500" fill="#0f6cbd"/><rect x="17" y="21" width="22" height="15.500" fill="#eab676"/><path d="M17 21l11 9l11-9" fill="none" stroke="#fff" stroke-width="1.500"/></svg>
<span class="t" style="left:835.10px;top:1042.97px;font-size:13.50px;line-height:13.50px;color:#fff;font-weight:700;">O</span>
<svg style="left:898px;top:1033px;" width="36" height="34" viewBox="0 0 36 34"><circle cx="20" cy="17" r="16" fill="#ed6c47"/><path d="M20 1a16 16 0 0 1 16 16H20z" fill="#ff8f6b"/><path d="M4 17a16 16 0 0 0 32 0z" fill="#d35230"/><rect x="0" y="8" width="18" height="18" rx="1.500" fill="#c43e1c"/></svg>
<span class="t" style="left:902.30px;top:1042.97px;font-size:13.50px;line-height:13.50px;color:#fff;font-weight:700;">P</span>
<svg style="left:964px;top:1033px;" width="36" height="34" viewBox="0 0 36 34"><rect x="9" y="1" width="26" height="32" rx="2" fill="#2b7cd3"/><rect x="9" y="1" width="26" height="8" fill="#41a5ee"/><rect x="9" y="9" width="26" height="8" fill="#2b7cd3"/><rect x="9" y="17" width="26" height="8" fill="#185abd"/><rect x="9" y="25" width="26" height="8" fill="#103f91"/><rect x="0" y="8" width="18" height="18" rx="1.500" fill="#185abd"/></svg>
<span class="t" style="left:966.40px;top:1042.97px;font-size:13.50px;line-height:13.50px;color:#fff;font-weight:700;">W</span>
<svg style="left:1030px;top:1033px;" width="36" height="36" viewBox="0 0 36 36"><path d="M12 8C20 3 31 8 31 17c0 4-2 6-4 6c1-5-3-10-9-9c-4 1-5 4-4 7c-4-2-6-9-2-13z" fill="#8a0a0a"/><path d="M22 28C14 33 3 28 3 19c0-4 2-6 4-6c-1 5 3 10 9 9c4-1 5-4 4-7c4 2 6 9 2 13z" fill="#8a0a0a"/><path d="M11 5.500c8 1 14 7 17 13" fill="none" stroke="#151515" stroke-width="1.600"/><g transform="translate(6.900,10.500)"><circle r="6.800" fill="#151515"/><circle r="6.800" fill="none" stroke="#7d0d0d" stroke-width="0.700"/><circle r="1.300" fill="#f0f0f0"/><circle cx="0" cy="-3.600" r="1.800" fill="#f0f0f0"/><circle cx="3.100" cy="1.800" r="1.800" fill="#f0f0f0"/><circle cx="-3.100" cy="1.800" r="1.800" fill="#f0f0f0"/></g><g transform="translate(26.200,24.200)"><circle r="6.800" fill="#151515"/><circle r="6.800" fill="none" stroke="#7d0d0d" stroke-width="0.700"/><circle r="1.300" fill="#f0f0f0"/><circle cx="0" cy="-3.600" r="1.800" fill="#f0f0f0"/><circle cx="3.100" cy="1.800" r="1.800" fill="#f0f0f0"/><circle cx="-3.100" cy="1.800" r="1.800" fill="#f0f0f0"/></g></svg>
<svg style="left:1096px;top:1033px;" width="36" height="38" viewBox="0 0 36 38"><ellipse cx="10" cy="20.300" rx="11" ry="4.700" fill="#f3eeee" stroke="#f09a9a" stroke-width="1.100" transform="rotate(-10 10 20.300)"/><ellipse cx="15.100" cy="9.200" rx="15" ry="7.800" fill="#f2f2f4" stroke="#e8383d" stroke-width="1.500" transform="rotate(-12 15.100 9.200)"/><path d="M7 9.500l14-3M8 13l12-2.500" stroke="#d8d8dc" stroke-width="0.900"/><path d="M13.800 4L18.700 18M4.100 11.800L18.700 18" stroke="#8d9097" stroke-width="1.800" stroke-linecap="round"/><ellipse cx="19.300" cy="27" rx="3" ry="6.300" fill="none" stroke="#2b88d8" stroke-width="1.700" transform="rotate(8 19.300 27)"/><ellipse cx="26.300" cy="23.200" rx="6" ry="3" fill="none" stroke="#2b88d8" stroke-width="1.700" transform="rotate(38 26.300 23.200)"/></svg>
<svg style="left:1160px;top:1033px;" width="34" height="34" viewBox="0 0 34 34"><defs><linearGradient id="skg" x1="0" y1="0" x2="1" y2="1"><stop offset="0" stop-color="#2cc4f2"/><stop offset="1" stop-color="#0a7ad6"/></linearGradient></defs><g fill="url(#skg)"><circle cx="10.500" cy="10.500" r="9.500"/><circle cx="23.500" cy="23.500" r="9.500"/><circle cx="17" cy="17" r="14.300"/></g></svg>
<span class="t" style="left:1169.00px;top:1038.84px;font-size:25.00px;line-height:25.00px;color:#fff;font-weight:700;">S</span>
<svg style="left:1225px;top:1033px;" width="36" height="36" viewBox="0 0 36 36"><circle cx="17" cy="17" r="18" fill="#0e6a97"/><g fill="none" stroke="#e6f1f7" stroke-width="1.100" stroke-linejoin="miter"><path d="M3.300 23.500V15.100L5.300 11.200L7.300 15.100V22.900M3.300 17.500h4"/><path d="M8.500 21.600L12.700 9.200L17.600 22.900"/><path d="M15 19L19.200 9.200L24 22.900"/><path d="M21 22.900L26.100 10.500L32.200 22.200"/><path d="M2 24.600C8 22 14 24.500 20 23.500S30 22 33.800 22.300"/></g></svg>
<svg style="left:1290px;top:1033px;" width="34" height="32" viewBox="0 0 34 32"><defs><linearGradient id="adg" x1="0" y1="0" x2="0" y2="1"><stop offset="0" stop-color="#ee1a12"/><stop offset="1" stop-color="#8a0500"/></linearGradient></defs><rect x="0.100" y="0" width="33" height="30.800" fill="url(#adg)"/><path d="M5 26.500c4-2 8-8 10-14s1-9-0.500-9s-2 4 0.500 9s8 9 12 9s3-3.300-1-3.300s-13 2.300-21 8.300z" fill="none" stroke="#fff" stroke-width="1.200"/></svg>
<svg style="left:1354px;top:1032px;" width="38" height="38" viewBox="0 0 38 38"><path d="M0.600 0.600H36V11H32.500V7.500H27V35.500H18V7.500H4V11H0.600z" fill="#3a9ad9" stroke="#0c0ca0" stroke-width="1.200"/><path d="M3 12.500h13l2.500 2.500v20.500H0.600V14z" fill="#f3f3f3" stroke="#6f6f6f" stroke-width="1.200"/><path d="M0.600 31l4 4.500H0.600z" fill="#bbb" stroke="#6f6f6f" stroke-width="0.800"/><path d="M4 18h7M4 20.500h8M4 23h6" stroke="#9a9a9a" stroke-width="0.800"/><path d="M11.500 19.500l15 9" stroke="#b8860b" stroke-width="4.400" stroke-linecap="butt"/><path d="M11.500 19.500l15 9" stroke="#ffd21e" stroke-width="3"/><path d="M8.300 17.600l4.600 0.600l-2.300 3.700z" fill="#111"/><path d="M25.500 26l3.300 2l-1.700 2.800l-3.300-2z" fill="#e58a8a"/></svg>
<svg style="left:1420px;top:1031px;" width="36" height="38" viewBox="0 0 36 38"><defs><linearGradient id="plg" x1="0" y1="0" x2="0" y2="1"><stop offset="0" stop-color="#e4f0fa"/><stop offset="1" stop-color="#a9cbe8"/></linearGradient></defs><path d="M2 24C-1 16 8 8 19 7C28 6.500 33 12 32 20C31 28 24 33 17 33C12 33 10 30 11 27.500C12 25 9 24 6 25.500C4 26.500 2.500 26 2 24z" fill="url(#plg)" stroke="#8fb4d6" stroke-width="0.800"/><circle cx="13.900" cy="22.700" r="1.900" fill="#e6dfcf"/><rect x="2.800" y="17.500" width="4.500" height="4.300" rx="1.200" fill="#e0483e"/><rect x="8.500" y="12.300" width="4.500" height="4.300" rx="1.200" fill="#5cbf4a"/><rect x="15.800" y="9.600" width="4.500" height="4.300" rx="1.200" fill="#f4b11c"/><path d="M27.800 10.500L17 35.200" stroke="#e88a20" stroke-width="2.200" stroke-linecap="round"/><path d="M29 7.500l-1.600 3.800" stroke="#b8b8b8" stroke-width="2.400"/><path d="M27 3l6.500-1l1 3.500l-4.500 3l-2.500-1z" fill="#c9a36f"/></svg>
<svg style="left:1488px;top:1035px;" width="36" height="34" viewBox="0 0 36 34"><circle cx="15.200" cy="15.800" r="14.900" fill="#fff"/><circle cx="15.200" cy="15.800" r="12.500" fill="#1596e0"/><circle cx="27.700" cy="23.700" r="6.500" fill="#f5a623" stroke="#fff" stroke-width="0.800"/></svg>
<span class="t" style="left:1496.50px;top:1039.18px;font-size:24.00px;line-height:24.00px;color:#fff;font-weight:700;">?</span>
<span class="t" style="left:1513.90px;top:1053.27px;font-size:11.50px;line-height:11.50px;color:#fff;font-weight:700;">i</span>
<svg style="left:1536.3px;top:1044.5px;" width="20" height="12" viewBox="0 0 20 12"><path d="M1 11L10 1.500L19 11" fill="none" stroke="#111" stroke-width="1.8"/></svg>
<div class="b" style="left:1570px;top:1038.3px;width:23.7px;height:22.7px;background:#231f20;"></div>
<span class="t" style="left:1572.50px;top:1044.30px;font-size:15.00px;line-height:15.00px;color:#fff;">B</span>
<span class="t" style="left:1581.00px;top:1046.00px;font-size:13.00px;line-height:13.00px;color:#fff;">O</span>
<span class="t" style="left:1582.00px;top:1041.50px;font-size:6.50px;line-height:6.50px;color:#fff;">&amp;</span>
<div class="b" style="left:1583.5px;top:1048px;width:5.5px;height:1px;background:#fff;"></div>
<svg style="left:1607px;top:1040px;" width="26" height="24" viewBox="0 0 26 24"><path d="M3 19A19 19 0 0 1 22 1.500M8 20.500A14 14 0 0 1 22 7M13 21.500A9 9 0 0 1 22 12.500" fill="none" stroke="#222" stroke-width="1.4"/><circle cx="20.500" cy="21" r="1.800" fill="#222"/></svg>
<svg style="left:1641px;top:1039px;" width="28" height="22" viewBox="0 0 28 22"><rect x="5.300" y="5" width="19" height="12" fill="none" stroke="#111" stroke-width="1.300"/><rect x="7.300" y="7" width="15" height="8" fill="#111"/><rect x="25" y="8.500" width="1.600" height="5" fill="#111"/><path d="M2.500 2v3.500M6 2v3.500M1 5.500h6.500v2.500a3.250 3 0 0 1-6.500 0zM4.250 11v4h2" fill="#e2dccb" stroke="#111" stroke-width="1.200"/></svg>
<span class="t" style="left:1682.50px;top:1041.76px;font-size:18.00px;line-height:18.00px;color:#111;letter-spacing:-2.166px;">ENG</span>
<span class="t" style="left:1761.50px;top:1027.76px;font-size:18.00px;line-height:18.00px;color:#111;letter-spacing:-0.677px;">19:31</span>
<span class="t" style="left:1737.00px;top:1054.76px;font-size:18.00px;line-height:18.00px;color:#111;letter-spacing:0.393px;">18/11/2019</span>
<svg style="left:1858px;top:1038px;" width="25" height="22" viewBox="0 0 25 22"><path d="M0 0h24.200v19.300h-14.500l-5.200 2.500v-2.500h-4.500z" fill="#0c0c0c"/><path d="M4.500 5h15.500M4.500 8.800h15.500M4.500 12.600h15.500" stroke="#e6e0cf" stroke-width="1.100"/></svg>
<div class="b" style="left:1866px;top:1047.300px;width:29.400px;height:28.600px;border-radius:50%;background:rgba(222,218,206,.92);border:1.200px solid #777"></div>
<span class="t" style="left:1870.70px;top:1052.49px;font-size:17.50px;line-height:17.50px;color:#111;letter-spacing:-0.113px;-webkit-text-stroke:0.3px;">27</span>
<div class="b" style="left:1912.7px;top:1020.5px;width:1.1px;height:59.5px;background:#a9a595;"></div>
</body></html>
